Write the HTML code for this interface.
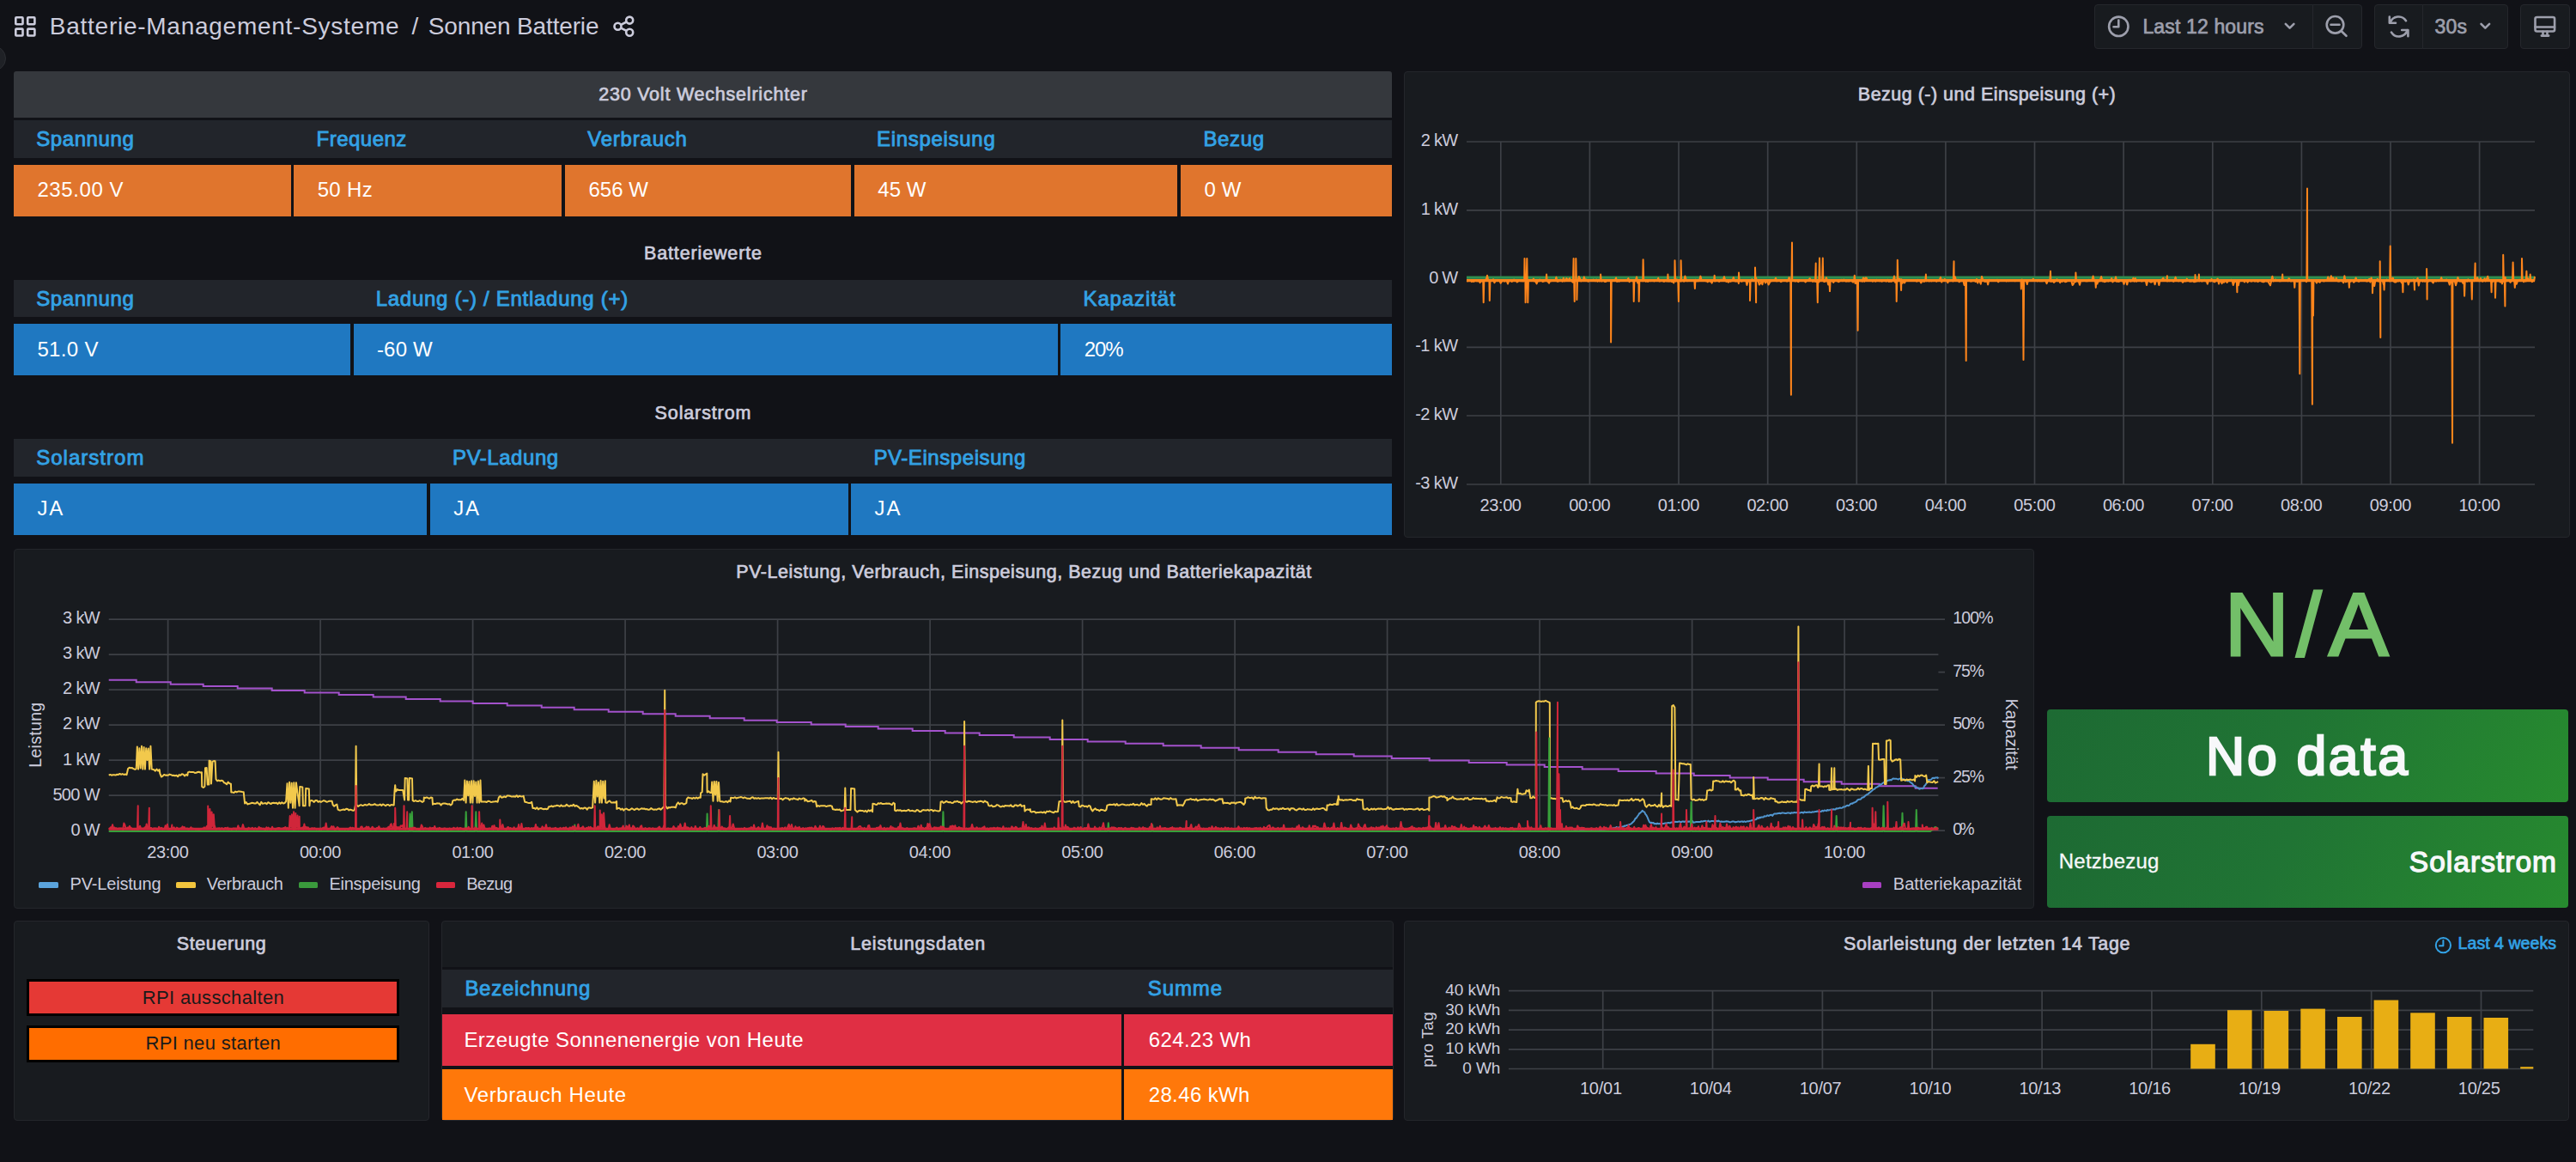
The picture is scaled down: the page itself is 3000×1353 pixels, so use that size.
<!DOCTYPE html>
<html lang="de"><head><meta charset="utf-8"><title>Sonnen Batterie - Grafana</title><style>
html,body{margin:0;padding:0;background:#111217;}
body{width:3000px;height:1353px;position:relative;overflow:hidden;font-family:"Liberation Sans",sans-serif;}
#root{position:absolute;left:0;top:0;width:3000px;height:1353px;overflow:hidden;background:#111217;}
#root>div{position:absolute;}
.t{position:absolute;white-space:nowrap;line-height:1;display:block;}
.ov{position:absolute;left:0;top:0;pointer-events:none;}
</style></head><body><div id="root">
<div style="left:2438.5px;top:5.0px;width:255.0px;height:51.5px;background:#181b1f;border:1px solid #25272c;box-sizing:border-box;border-radius:4px 0 0 4px;"></div>
<div style="left:2692.5px;top:5.0px;width:58.5px;height:51.5px;background:#181b1f;border:1px solid #25272c;box-sizing:border-box;border-radius:0 4px 4px 0;"></div>
<div style="left:2764.5px;top:5.0px;width:57.5px;height:51.5px;background:#181b1f;border:1px solid #25272c;box-sizing:border-box;border-radius:4px 0 0 4px;"></div>
<div style="left:2821.0px;top:5.0px;width:100.0px;height:51.5px;background:#181b1f;border:1px solid #25272c;box-sizing:border-box;border-radius:0 4px 4px 0;"></div>
<div style="left:2934.5px;top:5.0px;width:58.1px;height:51.5px;background:#181b1f;border:1px solid #25272c;box-sizing:border-box;border-radius:4px;"></div>
<div style="left:-24.0px;top:52.5px;width:30.5px;height:30.5px;background:#1f2126;border-radius:50%;border:1px solid #2c2e33;box-sizing:border-box;"></div>
<div style="left:16.0px;top:83.0px;width:1605.0px;height:54.0px;background:#35383d;border-radius:3px 3px 0 0;"></div>
<div style="left:16.0px;top:140.0px;width:1605.0px;height:43.8px;background:#22252b;"></div>
<div style="left:16.0px;top:191.8px;width:322.8px;height:59.8px;background:#e0752d;"></div>
<div style="left:342.3px;top:191.8px;width:311.9px;height:59.8px;background:#e0752d;"></div>
<div style="left:658.0px;top:191.8px;width:333.0px;height:59.8px;background:#e0752d;"></div>
<div style="left:994.8px;top:191.8px;width:376.7px;height:59.8px;background:#e0752d;"></div>
<div style="left:1375.2px;top:191.8px;width:245.8px;height:59.8px;background:#e0752d;"></div>
<div style="left:16.0px;top:325.5px;width:1605.0px;height:43.8px;background:#22252b;"></div>
<div style="left:16.0px;top:377.3px;width:391.7px;height:59.8px;background:#1f78c1;"></div>
<div style="left:411.5px;top:377.3px;width:820.3px;height:59.8px;background:#1f78c1;"></div>
<div style="left:1235.3px;top:377.3px;width:385.7px;height:59.8px;background:#1f78c1;"></div>
<div style="left:16.0px;top:511.0px;width:1605.0px;height:43.8px;background:#22252b;"></div>
<div style="left:16.0px;top:562.8px;width:481.3px;height:59.8px;background:#1f78c1;"></div>
<div style="left:500.9px;top:562.8px;width:486.7px;height:59.8px;background:#1f78c1;"></div>
<div style="left:991.2px;top:562.8px;width:629.8px;height:59.8px;background:#1f78c1;"></div>
<div style="left:1635.0px;top:83.0px;width:1357.5px;height:542.5px;background:#181b1f;border:1px solid #24262b;border-radius:4px;box-sizing:border-box;"></div>
<div style="left:16.0px;top:639.2px;width:2353.3px;height:418.5px;background:#181b1f;border:1px solid #24262b;border-radius:4px;box-sizing:border-box;"></div>
<div style="left:45.2px;top:1027.4px;width:22.6px;height:6.4px;background:#5ba4dc;border-radius:1.5px;"></div>
<div style="left:205.4px;top:1027.4px;width:22.6px;height:6.4px;background:#f2c53d;border-radius:1.5px;"></div>
<div style="left:347.5px;top:1027.4px;width:22.6px;height:6.4px;background:#3a9a3c;border-radius:1.5px;"></div>
<div style="left:507.8px;top:1027.4px;width:22.6px;height:6.4px;background:#d9263c;border-radius:1.5px;"></div>
<div style="left:2168.5px;top:1027.4px;width:22.6px;height:6.4px;background:#a83fc2;border-radius:1.5px;"></div>
<div style="left:2383.6px;top:826.2px;width:607.6px;height:107.4px;background:linear-gradient(120deg,#1d6a33 0%,#207434 45%,#278b2f 100%);border-radius:4px;"></div>
<div style="left:2383.6px;top:949.6px;width:607.6px;height:107.6px;background:linear-gradient(120deg,#1d6a33 0%,#207434 45%,#278b2f 100%);border-radius:4px;"></div>
<div style="left:16.0px;top:1072.0px;width:484.3px;height:233.3px;background:#181b1f;border:1px solid #24262b;border-radius:4px;box-sizing:border-box;"></div>
<div style="left:31.0px;top:1140.0px;width:433.8px;height:43.2px;background:#000;"></div>
<div style="left:34.0px;top:1143.0px;width:427.9px;height:37.3px;background:#e53935;"></div>
<div style="left:31.0px;top:1194.3px;width:433.8px;height:42.9px;background:#000;"></div>
<div style="left:34.0px;top:1197.4px;width:427.9px;height:36.8px;background:#ff6d00;"></div>
<div style="left:514.4px;top:1072.0px;width:1108.6px;height:233.3px;background:#181b1f;border:1px solid #24262b;border-radius:4px;box-sizing:border-box;"></div>
<div style="left:515.4px;top:1126.2px;width:1106.6px;height:3.0px;background:#111217;"></div>
<div style="left:515.4px;top:1129.2px;width:1106.6px;height:44.0px;background:#22252b;"></div>
<div style="left:515.4px;top:1173.2px;width:1106.6px;height:131.1px;background:#111217;"></div>
<div style="left:515.4px;top:1181.2px;width:790.2px;height:59.8px;background:#e02f44;"></div>
<div style="left:1309.4px;top:1181.2px;width:312.6px;height:59.8px;background:#e02f44;"></div>
<div style="left:515.4px;top:1244.8px;width:790.2px;height:59.5px;background:#ff780a;"></div>
<div style="left:1309.4px;top:1244.8px;width:312.6px;height:59.5px;background:#ff780a;"></div>
<div style="left:1635.4px;top:1072.0px;width:1357.0px;height:233.3px;background:#181b1f;border:1px solid #24262b;border-radius:4px;box-sizing:border-box;"></div>
<svg class="ov" width="3000" height="1353" viewBox="0 0 3000 1353">
<path d="M1708 165.0H2952M1708 244.9H2952M1708 324.8H2952M1708 404.4H2952M1708 484.0H2952M1708 564.0H2952M1747.8 165V564M1851.4 165V564M1955.0 165V564M2058.7 165V564M2162.3 165V564M2265.9 165V564M2369.5 165V564M2473.1 165V564M2576.8 165V564M2680.4 165V564M2784.0 165V564M2887.6 165V564" stroke="#3d4046" stroke-width="1.7" fill="none"/>
<path d="M1708 323.2H2952" stroke="#2f8f4f" stroke-width="3.2" fill="none"/>
<path d="M1708 326.6H2952" stroke="#ff851b" stroke-width="3.4" fill="none"/>
<path d="M1708.0 327.0 L1709.2 327.2 L1710.4 326.8 L1711.6 326.4 L1712.8 326.7 L1714.0 328.1 L1715.2 327.0 L1716.4 327.9 L1717.6 326.7 L1718.8 326.6 L1720.0 327.3 L1721.2 327.2 L1722.4 327.1 L1723.6 329.1 L1724.8 327.0 L1726.0 327.5 L1727.1 327.0 L1727.2 326.1 L1727.7 352.2 L1728.3 327.0 L1728.4 326.7 L1729.6 325.7 L1730.8 326.1 L1732.0 320.8 L1733.2 326.8 L1734.2 327.0 L1734.4 326.1 L1734.8 350.0 L1735.4 327.0 L1735.6 327.2 L1736.8 327.1 L1738.0 326.9 L1739.2 325.2 L1740.4 329.3 L1741.6 327.0 L1742.8 327.1 L1744.0 325.9 L1745.2 326.7 L1746.4 326.3 L1747.6 329.7 L1748.8 327.7 L1750.0 326.4 L1751.2 327.0 L1752.4 327.6 L1753.6 326.6 L1754.8 326.9 L1756.0 330.5 L1757.2 327.0 L1758.4 326.1 L1759.6 327.1 L1760.8 328.0 L1762.0 325.9 L1763.2 325.6 L1764.4 327.1 L1765.6 326.6 L1766.8 328.4 L1768.0 327.5 L1769.2 326.2 L1770.4 327.1 L1771.6 327.4 L1772.8 326.9 L1774.0 327.5 L1774.9 327.0 L1775.2 327.0 L1775.5 301.1 L1776.0 327.0 L1776.1 327.0 L1776.4 327.5 L1776.6 352.2 L1777.2 327.0 L1777.6 331.5 L1777.7 327.0 L1778.3 301.1 L1778.7 327.0 L1778.8 326.5 L1778.9 327.0 L1779.3 352.2 L1779.9 327.0 L1780.0 327.1 L1781.2 326.7 L1782.4 327.1 L1783.6 326.2 L1784.8 326.6 L1786.0 324.5 L1787.2 327.6 L1788.4 327.8 L1789.6 330.4 L1790.8 326.4 L1792.0 327.5 L1793.2 325.6 L1794.4 326.7 L1795.6 326.9 L1796.8 327.9 L1798.0 327.5 L1799.2 326.8 L1800.4 326.7 L1800.5 327.0 L1801.1 319.6 L1801.6 326.8 L1801.7 327.0 L1802.8 328.1 L1804.0 329.6 L1805.2 326.8 L1806.4 327.2 L1807.6 326.9 L1808.8 326.9 L1810.0 326.2 L1811.2 327.0 L1812.4 322.7 L1813.6 327.8 L1814.8 327.5 L1816.0 327.0 L1817.2 325.6 L1818.4 326.8 L1819.6 327.7 L1820.8 323.8 L1822.0 327.4 L1823.2 326.1 L1824.4 324.1 L1825.6 325.8 L1826.8 325.6 L1828.0 324.1 L1829.2 326.4 L1830.4 327.1 L1831.6 328.6 L1832.0 327.0 L1832.6 301.1 L1832.8 326.4 L1833.1 327.0 L1833.2 327.0 L1833.7 351.1 L1834.0 326.6 L1834.3 327.0 L1834.7 327.0 L1835.2 327.1 L1835.3 301.1 L1835.8 327.0 L1835.9 327.0 L1836.4 327.3 L1836.4 348.9 L1837.0 327.0 L1837.6 326.9 L1838.8 322.0 L1840.0 324.2 L1841.2 327.4 L1842.4 326.3 L1843.6 326.9 L1844.8 322.5 L1846.0 326.3 L1847.2 325.5 L1848.4 326.4 L1849.6 327.7 L1850.8 327.1 L1852.0 327.1 L1853.2 326.6 L1854.4 326.9 L1855.6 325.6 L1856.8 326.2 L1858.0 327.3 L1859.2 325.5 L1860.4 327.6 L1861.6 325.8 L1862.8 327.5 L1863.5 327.0 L1864.0 326.4 L1864.1 319.6 L1864.7 327.0 L1865.2 327.5 L1866.4 327.1 L1867.6 325.9 L1868.8 327.9 L1870.0 328.0 L1871.2 327.0 L1872.4 326.8 L1873.6 326.9 L1874.8 326.3 L1875.5 327.0 L1876.0 327.8 L1876.1 398.4 L1876.7 327.0 L1877.2 326.6 L1878.4 327.0 L1879.6 326.4 L1880.8 326.6 L1882.0 323.5 L1883.2 327.9 L1884.4 326.9 L1885.6 327.7 L1886.8 327.0 L1888.0 326.5 L1889.2 326.8 L1890.4 326.6 L1891.6 327.0 L1892.8 326.7 L1894.0 326.8 L1895.2 326.0 L1896.4 324.0 L1897.6 328.2 L1898.8 326.5 L1900.0 326.3 L1901.2 327.2 L1902.1 327.0 L1902.4 328.0 L1902.7 351.1 L1903.3 327.0 L1903.6 326.0 L1904.8 326.9 L1906.0 322.5 L1907.2 329.4 L1908.1 327.0 L1908.4 327.5 L1908.7 351.1 L1909.3 327.0 L1909.6 327.0 L1910.8 327.1 L1912.0 326.5 L1913.0 327.0 L1913.2 327.3 L1913.6 302.2 L1914.2 327.0 L1914.4 326.6 L1915.6 326.9 L1916.8 327.8 L1918.0 326.1 L1919.2 327.9 L1920.4 326.6 L1921.6 327.2 L1922.8 327.0 L1924.0 326.7 L1925.2 326.6 L1926.4 327.4 L1927.6 326.8 L1928.8 326.9 L1930.0 327.0 L1931.2 323.8 L1932.4 327.5 L1933.6 327.3 L1934.8 326.6 L1936.0 326.0 L1937.2 327.7 L1938.4 327.7 L1939.6 326.9 L1940.8 327.4 L1941.8 327.0 L1942.0 327.5 L1942.4 319.6 L1943.0 327.0 L1943.2 327.6 L1944.4 327.6 L1945.6 326.7 L1946.8 328.1 L1948.0 328.0 L1949.2 329.4 L1949.9 327.0 L1950.4 327.3 L1950.5 303.3 L1951.1 327.0 L1951.6 327.6 L1952.8 325.4 L1954.0 328.0 L1954.3 327.0 L1954.9 351.1 L1955.2 326.2 L1955.5 327.0 L1956.4 325.8 L1957.0 327.0 L1957.6 327.6 L1957.6 303.3 L1958.2 327.0 L1958.8 326.3 L1960.0 327.0 L1961.2 327.6 L1962.4 321.5 L1963.6 325.5 L1964.8 327.2 L1966.0 327.0 L1967.2 326.8 L1968.4 327.0 L1969.6 326.4 L1970.8 325.9 L1972.0 326.9 L1973.2 326.3 L1973.3 327.0 L1973.9 335.9 L1974.4 325.8 L1974.5 327.0 L1975.6 327.4 L1976.8 327.0 L1978.0 327.3 L1979.2 326.3 L1980.4 321.6 L1981.6 326.3 L1982.8 326.4 L1984.0 327.1 L1985.2 326.5 L1986.4 327.2 L1987.6 327.2 L1988.8 328.4 L1990.0 326.0 L1991.2 327.6 L1992.4 326.9 L1993.6 329.6 L1994.8 326.0 L1996.0 326.7 L1996.1 327.0 L1996.7 320.7 L1997.2 327.5 L1997.3 327.0 L1998.4 326.9 L1999.6 327.1 L2000.8 326.8 L2002.0 327.8 L2003.2 327.0 L2004.4 325.5 L2005.6 326.5 L2006.8 325.6 L2008.0 322.2 L2009.2 326.6 L2010.4 327.9 L2011.6 327.0 L2012.8 328.7 L2014.0 326.3 L2015.2 327.8 L2016.4 327.1 L2017.6 327.0 L2018.8 323.0 L2020.0 327.0 L2021.2 327.6 L2022.4 327.4 L2023.6 327.2 L2024.4 327.0 L2024.8 329.9 L2025.0 317.4 L2025.6 327.0 L2026.0 327.4 L2027.2 326.5 L2028.4 327.8 L2029.6 326.1 L2030.8 326.9 L2032.0 327.0 L2033.2 326.1 L2034.4 331.9 L2035.6 328.0 L2036.8 326.7 L2037.4 327.0 L2038.0 327.5 L2038.0 350.0 L2038.6 327.0 L2039.2 327.3 L2040.4 325.2 L2041.6 327.2 L2042.8 327.0 L2043.4 327.0 L2044.0 327.1 L2044.0 311.4 L2044.5 327.0 L2044.6 327.0 L2045.1 352.2 L2045.2 323.6 L2045.7 327.0 L2046.4 326.8 L2047.6 326.9 L2048.8 331.6 L2050.0 330.1 L2051.2 327.0 L2052.4 331.3 L2053.6 326.6 L2054.8 326.7 L2056.0 329.4 L2057.2 328.1 L2058.4 327.7 L2059.6 331.5 L2060.8 329.2 L2062.0 327.1 L2063.2 327.2 L2064.4 326.8 L2065.6 326.9 L2066.8 327.0 L2068.0 323.7 L2069.2 327.4 L2070.4 327.0 L2071.6 326.6 L2072.8 326.6 L2074.0 328.1 L2075.2 327.4 L2076.4 327.0 L2077.6 326.8 L2078.8 326.2 L2080.0 327.0 L2081.2 327.6 L2082.4 326.7 L2083.6 323.0 L2084.8 326.8 L2085.3 327.0 L2085.9 459.8 L2086.0 327.1 L2086.4 327.0 L2086.5 327.0 L2087.0 282.6 L2087.2 325.9 L2087.6 327.0 L2088.4 326.8 L2089.6 326.4 L2090.8 327.6 L2092.0 326.5 L2093.2 327.4 L2094.4 328.1 L2095.6 326.8 L2096.8 326.6 L2098.0 327.1 L2099.2 327.0 L2100.4 326.3 L2101.6 327.3 L2102.8 328.4 L2104.0 326.8 L2105.2 326.9 L2106.4 326.3 L2107.6 324.2 L2108.8 326.1 L2110.0 326.2 L2111.2 327.9 L2112.4 326.4 L2113.6 327.8 L2114.1 327.0 L2114.7 306.5 L2114.8 328.1 L2115.3 327.0 L2116.0 327.2 L2116.2 327.0 L2116.8 352.2 L2117.2 327.4 L2117.4 327.0 L2118.4 328.4 L2118.4 327.0 L2119.0 300.5 L2119.6 326.9 L2119.6 327.0 L2120.8 326.6 L2122.0 326.1 L2122.2 327.0 L2122.8 300.5 L2123.2 322.6 L2123.4 327.0 L2124.4 328.0 L2125.6 327.7 L2126.8 323.2 L2128.0 326.4 L2129.2 331.5 L2130.4 327.0 L2130.4 327.2 L2131.0 339.1 L2131.6 327.0 L2131.6 326.9 L2132.8 327.2 L2134.0 327.2 L2135.2 328.9 L2136.4 327.0 L2137.6 327.1 L2138.8 326.9 L2140.0 327.4 L2141.2 328.3 L2142.4 327.4 L2143.6 327.0 L2144.8 325.8 L2146.0 327.3 L2147.2 325.6 L2148.4 326.0 L2149.6 327.6 L2150.8 327.5 L2152.0 326.9 L2153.2 327.6 L2154.4 326.7 L2155.6 326.5 L2156.8 327.4 L2158.0 328.6 L2159.2 327.0 L2159.2 327.2 L2159.8 320.7 L2160.4 327.0 L2160.4 329.8 L2161.6 330.0 L2162.8 327.0 L2163.0 327.0 L2163.6 384.8 L2164.0 326.9 L2164.2 327.0 L2165.2 326.2 L2166.4 327.1 L2167.6 326.2 L2168.8 327.8 L2170.0 323.5 L2171.2 327.8 L2172.4 323.5 L2173.6 323.4 L2174.8 326.9 L2176.0 326.7 L2177.2 326.8 L2178.4 326.1 L2179.6 326.0 L2180.8 327.6 L2182.0 326.9 L2183.2 327.2 L2184.4 327.7 L2185.6 325.8 L2186.8 326.5 L2188.0 327.1 L2189.2 327.3 L2190.4 326.7 L2191.6 327.7 L2192.8 327.1 L2194.0 326.2 L2195.2 326.3 L2196.4 327.6 L2197.6 327.3 L2198.8 325.7 L2200.0 327.9 L2201.2 327.4 L2202.4 327.9 L2203.6 326.7 L2204.8 326.8 L2206.0 321.4 L2207.2 328.8 L2208.1 327.0 L2208.4 326.9 L2208.7 351.1 L2209.2 327.0 L2209.3 327.0 L2209.6 328.1 L2209.8 302.7 L2210.4 327.0 L2210.8 326.5 L2212.0 324.8 L2213.2 325.8 L2213.5 327.0 L2214.1 338.0 L2214.4 325.2 L2214.7 327.0 L2215.6 329.7 L2216.8 326.1 L2218.0 329.4 L2219.2 327.2 L2220.4 326.3 L2221.6 326.6 L2222.8 326.7 L2224.0 327.0 L2225.2 326.6 L2226.4 326.4 L2227.6 326.8 L2228.8 326.3 L2230.0 326.1 L2231.2 327.0 L2232.4 327.6 L2233.6 325.9 L2234.8 327.0 L2236.0 326.5 L2237.2 329.4 L2238.4 327.6 L2239.6 326.6 L2240.8 328.0 L2242.0 326.5 L2242.3 327.0 L2242.9 319.6 L2243.2 327.3 L2243.5 327.0 L2244.4 326.8 L2245.6 326.5 L2246.8 327.4 L2248.0 326.9 L2249.2 327.4 L2250.4 327.0 L2251.6 326.2 L2252.8 326.9 L2254.0 327.0 L2255.2 327.7 L2256.4 326.4 L2257.6 327.0 L2258.8 325.8 L2260.0 322.9 L2261.2 328.6 L2262.4 325.7 L2263.6 327.0 L2264.8 325.1 L2266.0 325.9 L2267.2 326.2 L2268.4 329.2 L2269.6 326.2 L2270.8 327.3 L2272.0 326.4 L2273.2 326.5 L2274.4 327.4 L2274.9 327.0 L2275.5 304.3 L2275.6 326.5 L2276.1 327.0 L2276.8 322.3 L2278.0 326.3 L2279.2 326.2 L2280.4 325.7 L2281.6 328.3 L2282.8 326.8 L2284.0 327.2 L2285.2 327.0 L2286.4 327.1 L2287.6 332.0 L2288.8 328.3 L2289.1 327.0 L2289.7 420.1 L2290.0 326.3 L2290.3 327.0 L2291.2 325.9 L2292.4 326.3 L2293.6 326.1 L2294.8 327.5 L2296.0 327.6 L2297.2 326.3 L2298.4 326.0 L2299.6 326.8 L2300.8 328.0 L2302.0 325.0 L2303.2 329.6 L2304.4 326.2 L2305.6 327.7 L2306.8 330.7 L2308.0 321.9 L2309.2 325.9 L2310.4 326.3 L2311.6 328.0 L2312.8 327.6 L2314.0 326.7 L2315.2 331.4 L2316.4 325.7 L2317.6 326.7 L2318.8 327.0 L2320.0 326.9 L2321.2 326.9 L2322.4 326.2 L2323.6 327.0 L2324.8 327.0 L2326.0 325.8 L2327.2 328.3 L2328.4 326.9 L2329.6 326.5 L2330.8 327.0 L2332.0 326.6 L2333.2 326.5 L2334.4 327.0 L2335.6 326.3 L2336.8 327.4 L2338.0 326.9 L2339.2 327.2 L2340.4 326.9 L2341.6 326.5 L2342.8 326.3 L2344.0 326.8 L2345.2 326.6 L2346.4 327.2 L2347.6 327.0 L2348.8 326.0 L2350.0 327.0 L2351.2 326.1 L2352.4 326.6 L2353.2 327.0 L2353.6 326.8 L2353.8 336.4 L2354.4 327.0 L2354.8 325.5 L2355.9 327.0 L2356.0 327.1 L2356.5 419.0 L2357.1 327.0 L2357.2 327.1 L2358.4 326.9 L2359.6 326.7 L2360.8 331.0 L2362.0 326.3 L2363.2 326.8 L2364.4 326.6 L2365.6 327.1 L2366.8 326.2 L2368.0 324.7 L2369.2 327.1 L2370.4 326.9 L2371.6 326.7 L2372.8 327.4 L2374.0 325.8 L2375.2 327.3 L2376.4 327.2 L2377.6 327.2 L2378.8 327.3 L2380.0 326.5 L2381.2 326.8 L2382.4 327.4 L2383.6 330.1 L2384.8 327.1 L2386.0 325.9 L2387.2 327.4 L2387.4 327.0 L2388.0 315.8 L2388.4 327.8 L2388.6 327.0 L2389.6 327.7 L2390.8 327.2 L2392.0 328.9 L2393.2 327.7 L2394.4 326.9 L2395.6 325.2 L2396.8 327.3 L2398.0 326.0 L2399.2 329.2 L2400.4 326.6 L2401.6 327.9 L2402.8 326.7 L2404.0 327.2 L2405.2 328.2 L2406.4 328.1 L2407.6 326.9 L2408.8 326.8 L2410.0 326.1 L2411.2 326.5 L2412.4 327.3 L2413.6 332.1 L2414.8 330.7 L2416.0 327.7 L2416.8 327.0 L2417.2 328.3 L2417.4 317.4 L2418.0 327.0 L2418.4 327.0 L2419.6 327.5 L2420.8 327.4 L2422.0 331.8 L2423.2 327.3 L2424.4 326.8 L2425.6 327.3 L2426.8 326.3 L2428.0 325.9 L2429.2 327.4 L2430.4 327.0 L2431.6 327.2 L2432.8 325.8 L2434.0 326.7 L2435.2 326.6 L2436.4 326.4 L2437.6 321.4 L2438.8 326.8 L2440.0 327.6 L2440.2 327.0 L2440.8 334.8 L2441.2 327.3 L2441.4 327.0 L2442.4 330.6 L2443.6 327.0 L2444.8 327.5 L2446.0 325.1 L2447.2 322.1 L2448.4 327.4 L2449.6 327.5 L2450.8 328.2 L2452.0 327.8 L2453.2 327.2 L2454.4 327.2 L2455.6 327.6 L2456.8 326.6 L2458.0 327.0 L2459.2 324.0 L2460.4 328.4 L2461.6 326.9 L2462.8 327.0 L2464.0 322.5 L2465.2 327.9 L2466.4 327.0 L2467.6 328.0 L2468.8 326.3 L2470.0 326.9 L2471.2 326.9 L2472.4 327.6 L2473.6 330.8 L2474.8 325.9 L2476.0 326.4 L2477.2 331.4 L2478.4 326.5 L2479.6 325.9 L2480.8 327.7 L2482.0 327.3 L2483.2 327.3 L2484.4 323.8 L2485.6 327.7 L2486.8 324.0 L2488.0 327.8 L2489.2 326.4 L2490.4 326.4 L2491.6 327.1 L2492.8 326.5 L2494.0 327.5 L2495.2 327.2 L2496.4 326.4 L2497.6 327.1 L2498.8 326.8 L2500.0 332.0 L2501.2 326.6 L2502.4 326.7 L2503.6 327.8 L2504.8 328.6 L2506.0 328.4 L2507.2 327.0 L2508.4 327.2 L2509.6 331.3 L2510.8 326.9 L2512.0 326.3 L2513.2 327.1 L2514.4 332.0 L2515.6 326.4 L2516.8 325.8 L2518.0 326.0 L2519.2 323.7 L2520.4 326.5 L2521.6 326.9 L2522.8 327.1 L2523.3 327.0 L2523.9 321.2 L2524.0 327.4 L2524.5 327.0 L2525.2 326.8 L2526.4 327.3 L2527.6 326.4 L2528.8 326.7 L2530.0 326.3 L2531.2 327.8 L2532.4 327.0 L2533.6 322.7 L2534.8 326.8 L2536.0 326.8 L2537.2 327.5 L2538.4 325.9 L2539.6 326.3 L2540.8 326.7 L2542.0 328.8 L2543.2 327.7 L2544.4 326.9 L2545.6 327.5 L2546.8 324.6 L2548.0 326.8 L2549.2 326.7 L2550.4 327.8 L2551.6 327.3 L2552.8 327.5 L2554.0 326.6 L2555.2 328.3 L2555.9 327.0 L2556.4 328.2 L2556.5 320.1 L2557.1 327.0 L2557.6 327.4 L2558.8 327.5 L2560.0 325.6 L2560.3 327.0 L2560.9 319.6 L2561.2 327.4 L2561.5 327.0 L2562.4 326.9 L2563.6 327.3 L2564.8 327.5 L2566.0 326.8 L2567.2 325.8 L2568.4 327.3 L2569.6 326.5 L2570.8 330.6 L2572.0 326.6 L2573.2 326.8 L2574.4 327.4 L2575.6 324.9 L2576.8 327.2 L2578.0 327.8 L2579.2 328.4 L2580.4 327.0 L2581.6 325.7 L2582.8 324.6 L2584.0 330.5 L2585.2 326.6 L2586.4 327.1 L2587.6 330.2 L2588.8 327.2 L2590.0 328.8 L2591.2 327.2 L2592.4 326.9 L2593.6 329.0 L2594.8 326.9 L2596.0 326.6 L2597.2 326.6 L2598.4 325.8 L2599.6 327.0 L2600.8 332.0 L2602.0 328.4 L2603.2 327.9 L2604.4 327.5 L2604.8 327.0 L2605.4 340.2 L2605.6 326.5 L2606.0 327.0 L2606.8 332.3 L2608.0 327.0 L2609.2 327.0 L2610.4 326.8 L2611.6 327.1 L2612.8 326.7 L2614.0 328.5 L2615.2 326.2 L2616.4 326.7 L2617.6 328.6 L2618.8 327.0 L2620.0 326.8 L2621.2 327.4 L2622.4 327.5 L2623.6 326.2 L2624.8 326.9 L2626.0 327.6 L2627.2 327.2 L2628.4 327.1 L2629.6 328.1 L2630.8 326.5 L2632.0 327.1 L2633.2 326.6 L2634.4 328.0 L2635.6 328.2 L2636.8 328.2 L2638.0 326.6 L2639.2 327.5 L2640.4 327.4 L2641.6 328.0 L2642.8 330.3 L2644.0 332.3 L2645.2 326.8 L2646.4 321.8 L2647.6 327.4 L2648.8 326.4 L2650.0 325.5 L2651.2 326.7 L2652.4 326.0 L2653.6 326.5 L2654.8 327.3 L2656.0 327.2 L2657.2 326.1 L2657.6 327.0 L2658.2 319.6 L2658.4 323.8 L2658.8 327.0 L2659.6 325.9 L2660.8 326.5 L2662.0 326.4 L2663.2 326.1 L2664.4 327.3 L2665.6 324.2 L2666.8 325.6 L2668.0 327.5 L2669.2 326.9 L2670.4 327.2 L2671.6 327.1 L2671.7 327.0 L2672.3 334.8 L2672.8 327.4 L2672.9 327.0 L2674.0 327.0 L2675.2 327.9 L2676.4 327.3 L2677.6 327.3 L2677.7 327.0 L2678.3 435.3 L2678.8 327.3 L2678.9 327.0 L2680.0 326.0 L2681.2 326.9 L2682.4 326.8 L2683.6 327.1 L2684.8 326.0 L2686.0 328.1 L2686.4 327.0 L2687.0 219.6 L2687.2 327.1 L2687.6 327.0 L2688.4 326.2 L2689.6 325.8 L2690.8 326.8 L2692.0 326.9 L2692.3 327.0 L2692.9 470.7 L2693.2 326.5 L2693.4 327.0 L2693.5 327.0 L2694.0 367.4 L2694.4 327.1 L2694.6 327.0 L2695.6 326.6 L2696.8 327.4 L2698.0 329.5 L2699.2 327.0 L2700.4 327.7 L2701.6 328.8 L2702.8 326.3 L2704.0 326.7 L2705.2 326.4 L2706.4 327.5 L2707.6 326.2 L2708.8 326.7 L2710.0 327.0 L2711.2 322.4 L2712.4 326.3 L2713.6 326.7 L2714.8 321.2 L2716.0 326.0 L2717.2 323.4 L2718.4 327.1 L2719.6 326.9 L2720.8 323.8 L2722.0 326.7 L2723.2 327.6 L2724.4 327.4 L2725.6 326.9 L2726.8 326.4 L2728.0 327.4 L2729.2 329.2 L2730.4 321.2 L2731.6 328.3 L2732.8 328.0 L2734.0 327.2 L2735.2 327.8 L2735.3 327.0 L2735.9 334.8 L2736.4 326.7 L2736.5 327.0 L2737.6 327.7 L2738.8 326.6 L2740.0 326.9 L2741.2 328.7 L2742.4 327.5 L2743.6 323.4 L2744.8 326.9 L2746.0 327.2 L2747.2 327.8 L2748.4 326.7 L2749.6 325.8 L2750.8 326.8 L2752.0 327.0 L2753.2 327.1 L2754.4 325.7 L2755.6 327.2 L2756.8 327.6 L2758.0 326.2 L2759.2 324.8 L2760.4 328.5 L2761.6 323.4 L2762.4 327.0 L2762.8 327.2 L2763.0 341.3 L2763.6 327.0 L2764.0 327.1 L2765.2 333.0 L2766.4 326.4 L2767.6 326.9 L2768.8 324.8 L2770.0 327.5 L2771.1 327.0 L2771.2 326.7 L2771.7 327.0 L2771.7 304.3 L2772.3 392.9 L2772.3 327.0 L2772.4 327.2 L2772.9 327.0 L2773.6 326.8 L2774.8 327.1 L2776.0 331.6 L2776.0 327.0 L2776.6 337.5 L2777.2 326.2 L2777.2 327.0 L2778.4 327.0 L2779.6 325.5 L2780.8 326.3 L2782.0 326.8 L2783.1 327.0 L2783.2 327.5 L2783.7 286.4 L2784.3 327.0 L2784.4 326.3 L2785.6 325.2 L2786.8 323.5 L2788.0 327.8 L2789.2 328.6 L2790.4 328.4 L2791.6 326.8 L2792.8 327.5 L2794.0 327.1 L2795.2 327.1 L2796.4 328.1 L2797.6 329.9 L2797.8 327.0 L2798.4 340.2 L2798.8 327.7 L2799.0 327.0 L2800.0 327.0 L2801.2 328.0 L2802.4 327.1 L2803.6 326.5 L2804.8 331.4 L2806.0 327.5 L2807.2 327.0 L2808.4 327.3 L2809.6 326.6 L2810.8 325.5 L2811.4 327.0 L2812.0 337.5 L2812.0 327.6 L2812.6 327.0 L2813.2 327.5 L2814.4 327.1 L2815.6 323.7 L2816.8 332.5 L2818.0 326.7 L2819.2 326.5 L2820.4 326.9 L2821.6 327.8 L2822.8 326.0 L2824.0 327.8 L2825.2 326.6 L2825.5 327.0 L2826.0 327.0 L2826.1 313.0 L2826.4 326.2 L2826.6 348.4 L2826.7 327.0 L2827.2 327.0 L2827.6 327.9 L2828.8 326.9 L2830.0 326.1 L2831.2 326.7 L2832.4 327.7 L2833.6 329.5 L2834.8 326.7 L2836.0 327.3 L2837.2 327.5 L2838.4 326.5 L2839.6 327.2 L2840.8 327.0 L2842.0 326.6 L2843.2 323.3 L2844.4 327.0 L2845.6 327.0 L2846.8 326.6 L2848.0 326.7 L2849.2 325.5 L2850.4 327.1 L2851.6 327.6 L2852.8 331.6 L2854.0 327.4 L2855.2 328.6 L2855.4 327.0 L2856.0 515.8 L2856.4 326.4 L2856.6 327.0 L2857.6 327.6 L2858.8 326.8 L2860.0 332.2 L2861.2 328.2 L2862.4 323.0 L2863.6 326.3 L2864.8 327.5 L2866.0 327.6 L2867.2 327.5 L2868.4 329.7 L2869.5 327.0 L2869.6 327.3 L2870.1 344.6 L2870.7 327.0 L2870.8 327.5 L2872.0 326.9 L2873.2 327.7 L2874.4 325.4 L2875.6 327.4 L2876.8 326.3 L2878.0 327.7 L2878.2 327.0 L2878.8 348.4 L2879.2 326.8 L2879.4 327.0 L2880.4 326.4 L2881.6 327.3 L2882.0 327.0 L2882.6 306.5 L2882.8 326.4 L2883.2 327.0 L2884.0 326.4 L2885.2 323.1 L2886.4 327.0 L2887.6 327.3 L2888.8 324.0 L2890.0 326.9 L2891.2 327.7 L2892.4 327.0 L2893.6 324.4 L2894.8 327.4 L2896.0 325.0 L2897.2 321.8 L2898.4 326.8 L2899.6 326.9 L2900.8 327.1 L2901.0 327.0 L2901.6 340.2 L2902.0 326.4 L2902.2 327.0 L2903.2 327.7 L2904.4 326.7 L2905.4 327.0 L2905.6 327.3 L2906.0 346.7 L2906.6 327.0 L2906.8 326.4 L2908.0 327.3 L2909.2 327.3 L2910.4 326.7 L2911.6 328.4 L2912.8 327.3 L2914.0 330.4 L2914.6 327.0 L2915.2 327.7 L2915.2 296.7 L2915.8 327.0 L2916.4 326.5 L2916.8 327.0 L2917.4 356.5 L2917.6 322.7 L2918.0 327.0 L2918.8 327.3 L2920.0 327.0 L2921.2 327.0 L2922.4 326.8 L2923.6 328.8 L2924.8 326.8 L2926.0 325.4 L2926.0 327.0 L2926.6 305.4 L2927.2 323.5 L2927.2 327.0 L2928.2 327.0 L2928.4 329.6 L2928.8 334.8 L2929.4 327.0 L2929.6 330.5 L2930.8 330.7 L2932.0 327.2 L2933.2 326.0 L2934.4 325.8 L2935.6 326.3 L2936.4 327.0 L2936.8 325.6 L2937.0 301.1 L2937.6 327.0 L2938.0 326.3 L2939.2 328.1 L2940.4 326.3 L2941.6 327.5 L2941.8 327.0 L2942.4 315.8 L2942.8 326.0 L2943.0 327.0 L2944.0 324.4 L2945.2 326.8 L2946.1 327.0 L2946.4 327.0 L2946.7 319.6 L2947.3 327.0 L2947.6 325.6 L2948.8 328.2 L2950.0 327.1 L2951.2 327.1 L2952.0 322.0" stroke="#ff851b" stroke-width="2" fill="none" stroke-linejoin="round"/>
<path d="M126.7 721.2H2257.4M126.7 762.2H2257.4M126.7 803.2H2257.4M126.7 844.1H2257.4M126.7 885.1H2257.4M126.7 926.1H2257.4M126.7 967.1H2257.4M195.6 721.2V967.1M373.1 721.2V967.1M550.6 721.2V967.1M728.1 721.2V967.1M905.6 721.2V967.1M1083.1 721.2V967.1M1260.6 721.2V967.1M1438.1 721.2V967.1M1615.6 721.2V967.1M1793.1 721.2V967.1M1970.6 721.2V967.1M2148.1 721.2V967.1M2257.4 721.2H2265M2257.4 782.7H2265M2257.4 844.1H2265M2257.4 905.6H2265M2257.4 967.1H2265" stroke="#3d4046" stroke-width="1.7" fill="none"/>
<path d="M126.7 791.7 L158.7 791.7 L158.7 794.2 L198.7 794.2 L198.7 796.7 L236.7 796.7 L236.7 799.1 L276.7 799.1 L276.7 801.6 L316.7 801.6 L316.7 804.1 L354.7 804.1 L354.7 806.5 L394.7 806.5 L394.7 809.0 L434.7 809.0 L434.7 811.5 L472.7 811.5 L472.7 814.0 L512.7 814.0 L512.7 816.4 L550.7 816.4 L550.7 818.9 L590.7 818.9 L590.7 821.4 L630.7 821.4 L630.7 823.8 L668.7 823.8 L668.7 826.3 L708.7 826.3 L708.7 828.8 L748.7 828.8 L748.7 831.2 L786.7 831.2 L786.7 833.7 L826.7 833.7 L826.7 836.2 L866.7 836.2 L866.7 838.7 L904.7 838.7 L904.7 841.1 L944.7 841.1 L944.7 843.6 L984.7 843.6 L984.7 846.1 L1022.7 846.1 L1022.7 848.5 L1062.7 848.5 L1062.7 851.0 L1100.7 851.0 L1100.7 853.5 L1140.7 853.5 L1140.7 856.0 L1180.7 856.0 L1180.7 858.4 L1222.7 858.4 L1222.7 860.9 L1266.7 860.9 L1266.7 863.4 L1310.7 863.4 L1310.7 865.8 L1354.7 865.8 L1354.7 868.3 L1398.7 868.3 L1398.7 870.8 L1442.7 870.8 L1442.7 873.2 L1488.7 873.2 L1488.7 875.7 L1532.7 875.7 L1532.7 878.2 L1576.7 878.2 L1576.7 880.6 L1620.7 880.6 L1620.7 883.1 L1664.7 883.1 L1664.7 885.6 L1710.7 885.6 L1710.7 888.1 L1754.7 888.1 L1754.7 890.5 L1798.7 890.5 L1798.7 893.0 L1842.7 893.0 L1842.7 895.5 L1884.7 895.5 L1884.7 897.9 L1928.7 897.9 L1928.7 900.4 L1972.7 900.4 L1972.7 902.9 L2014.7 902.9 L2014.7 905.4 L2058.7 905.4 L2058.7 907.8 L2100.7 907.8 L2100.7 910.3 L2144.7 910.3 L2144.7 912.8 L2188.7 912.8 L2188.7 915.2 L2230.7 915.2 L2230.7 917.7 L2256.7 917.7" stroke="#a352cc" stroke-width="2" fill="none"/>
<path d="M1824.2 967.8 L1825.4 967.5 L1826.5 967.6 L1827.7 967.8 L1828.9 967.9 L1830.0 967.6 L1831.2 967.8 L1832.4 967.9 L1833.5 966.9 L1834.7 967.1 L1835.9 966.9 L1837.0 967.3 L1838.2 967.8 L1839.4 967.4 L1840.5 966.8 L1841.7 967.0 L1842.8 967.5 L1844.0 966.9 L1845.2 967.0 L1846.3 967.1 L1847.5 966.3 L1848.7 967.3 L1849.8 967.1 L1851.0 967.1 L1852.2 966.5 L1853.3 966.6 L1854.5 966.6 L1855.7 966.9 L1856.8 966.8 L1858.0 966.8 L1859.2 967.4 L1860.3 967.2 L1861.5 966.4 L1862.6 966.2 L1863.8 967.0 L1865.0 966.1 L1866.1 966.5 L1867.3 966.5 L1868.5 965.5 L1869.6 965.5 L1870.8 965.4 L1872.0 964.9 L1873.1 964.7 L1874.3 964.8 L1875.5 965.1 L1876.6 964.5 L1877.8 964.4 L1878.9 964.2 L1880.1 963.7 L1881.3 964.6 L1882.4 963.0 L1883.6 963.5 L1884.8 963.8 L1885.9 962.9 L1887.1 963.5 L1888.3 963.6 L1889.4 962.6 L1890.6 962.5 L1891.8 961.6 L1892.9 961.7 L1894.1 961.1 L1895.3 960.7 L1896.4 960.7 L1897.6 959.9 L1898.7 959.7 L1899.9 959.0 L1901.1 957.8 L1902.2 956.8 L1903.4 955.3 L1904.6 953.0 L1905.7 952.5 L1906.9 950.5 L1908.1 949.0 L1909.2 947.1 L1910.4 946.3 L1911.6 945.2 L1912.7 943.8 L1913.9 945.1 L1915.1 945.4 L1916.2 947.9 L1917.4 949.2 L1918.5 951.4 L1919.7 954.4 L1920.9 957.0 L1922.0 958.1 L1923.2 957.7 L1924.4 958.3 L1925.5 958.0 L1926.7 959.3 L1927.9 958.9 L1929.0 959.5 L1930.2 958.6 L1931.4 959.3 L1932.5 958.9 L1933.7 959.6 L1934.8 959.8 L1936.0 959.1 L1937.2 959.1 L1938.3 958.8 L1939.5 958.5 L1940.7 958.6 L1941.8 958.3 L1943.0 957.9 L1944.2 958.3 L1945.3 958.3 L1946.5 957.4 L1947.7 957.4 L1948.8 957.5 L1950.0 957.2 L1951.2 956.8 L1952.3 957.1 L1953.5 957.0 L1954.6 956.7 L1955.8 956.4 L1957.0 957.2 L1958.1 957.2 L1959.3 956.4 L1960.5 956.5 L1961.6 957.0 L1962.8 956.3 L1964.0 956.8 L1965.1 956.7 L1966.3 956.5 L1967.5 956.7 L1968.6 956.2 L1969.8 956.6 L1971.0 956.1 L1972.1 957.7 L1973.3 957.5 L1974.4 957.3 L1975.6 956.9 L1976.8 957.1 L1977.9 957.1 L1979.1 957.0 L1980.3 956.9 L1981.4 956.2 L1982.6 956.6 L1983.8 956.2 L1984.9 955.9 L1986.1 955.8 L1987.3 956.4 L1988.4 956.5 L1989.6 955.6 L1990.7 956.7 L1991.9 956.5 L1993.1 955.9 L1994.2 955.9 L1995.4 956.1 L1996.6 956.5 L1997.7 956.0 L1998.9 955.8 L2000.1 956.4 L2001.2 955.5 L2002.4 956.4 L2003.6 956.8 L2004.7 956.5 L2005.9 956.7 L2007.1 956.7 L2008.2 956.8 L2009.4 956.6 L2010.5 956.3 L2011.7 956.5 L2012.9 956.6 L2014.0 957.2 L2015.2 957.3 L2016.4 956.9 L2017.5 956.5 L2018.7 956.6 L2019.9 956.8 L2021.0 957.4 L2022.2 956.9 L2023.4 956.7 L2024.5 956.4 L2025.7 956.9 L2026.9 956.7 L2028.0 956.5 L2029.2 956.5 L2030.3 957.0 L2031.5 956.3 L2032.7 956.9 L2033.8 956.7 L2035.0 956.2 L2036.2 956.4 L2037.3 956.0 L2038.5 955.7 L2039.7 955.5 L2040.8 954.9 L2042.0 955.0 L2043.2 954.4 L2044.3 954.2 L2045.5 954.0 L2046.6 952.1 L2047.8 953.0 L2049.0 951.8 L2050.1 952.2 L2051.3 951.4 L2052.5 951.4 L2053.6 951.6 L2054.8 950.2 L2056.0 950.6 L2057.1 950.3 L2058.3 949.3 L2059.5 950.0 L2060.6 949.5 L2061.8 949.0 L2063.0 948.7 L2064.1 949.9 L2065.3 948.3 L2066.4 947.5 L2067.6 947.6 L2068.8 947.5 L2069.9 947.3 L2071.1 947.1 L2072.3 946.7 L2073.4 947.2 L2074.6 946.8 L2075.8 946.4 L2076.9 946.6 L2078.1 946.7 L2079.3 947.1 L2080.4 946.9 L2081.6 946.5 L2082.8 946.6 L2083.9 946.6 L2085.1 947.2 L2086.2 946.2 L2087.4 946.5 L2088.6 946.5 L2089.7 945.9 L2090.9 946.2 L2092.1 946.2 L2093.2 945.9 L2094.4 946.2 L2095.6 946.4 L2096.7 946.4 L2097.9 945.8 L2099.1 945.9 L2100.2 946.7 L2101.4 945.3 L2102.5 945.8 L2103.7 946.0 L2104.9 945.7 L2106.0 945.8 L2107.2 945.6 L2108.4 945.8 L2109.5 945.9 L2110.7 945.3 L2111.9 945.4 L2113.0 945.3 L2114.2 945.0 L2115.4 945.0 L2116.5 944.4 L2117.7 945.0 L2118.9 945.2 L2120.0 945.1 L2121.2 944.8 L2122.3 943.8 L2123.5 944.6 L2124.7 943.6 L2125.8 943.7 L2127.0 944.2 L2128.2 943.0 L2129.3 943.6 L2130.5 943.2 L2131.7 942.9 L2132.8 942.5 L2134.0 942.7 L2135.2 942.2 L2136.3 942.6 L2137.5 942.5 L2138.7 941.3 L2139.8 941.4 L2141.0 941.3 L2142.1 940.8 L2143.3 940.6 L2144.5 940.9 L2145.6 940.6 L2146.8 939.5 L2148.0 939.4 L2149.1 939.3 L2150.3 938.2 L2151.5 937.8 L2152.6 938.2 L2153.8 937.6 L2155.0 936.0 L2156.1 935.6 L2157.3 935.8 L2158.4 934.7 L2159.6 934.5 L2160.8 933.8 L2161.9 933.4 L2163.1 931.6 L2164.3 931.0 L2165.4 930.7 L2166.6 930.8 L2167.8 929.7 L2168.9 928.4 L2170.1 928.4 L2171.3 927.6 L2172.4 926.4 L2173.6 925.5 L2174.8 924.9 L2175.9 924.3 L2177.1 923.0 L2178.2 922.3 L2179.4 921.2 L2180.6 920.2 L2181.7 919.1 L2182.9 918.7 L2184.1 917.6 L2185.2 916.8 L2186.4 916.4 L2187.6 915.3 L2188.7 914.8 L2189.9 913.2 L2191.1 913.3 L2192.2 912.1 L2193.4 911.4 L2194.5 910.6 L2195.7 910.7 L2196.9 909.9 L2198.0 909.0 L2199.2 908.5 L2200.4 908.5 L2201.5 908.0 L2202.7 908.4 L2203.9 906.9 L2205.0 906.5 L2206.2 906.7 L2207.4 906.8 L2208.5 906.8 L2209.7 907.1 L2210.9 907.6 L2212.0 906.7 L2213.2 906.6 L2214.3 906.1 L2215.5 906.9 L2216.7 907.5 L2217.8 907.5 L2219.0 908.4 L2220.2 908.3 L2221.3 909.3 L2222.5 909.2 L2223.7 909.7 L2224.8 910.9 L2226.0 911.6 L2227.2 912.5 L2228.3 914.2 L2229.5 915.5 L2230.7 916.5 L2231.8 916.5 L2233.0 917.1 L2234.1 917.4 L2235.3 918.7 L2236.5 918.4 L2237.6 917.9 L2238.8 918.3 L2240.0 917.8 L2241.1 915.0 L2242.3 914.1 L2243.5 912.0 L2244.6 909.9 L2245.8 908.0 L2247.0 908.4 L2248.1 907.9 L2249.3 907.5 L2250.4 906.0 L2251.6 905.7 L2252.8 906.2 L2253.9 905.4 L2255.1 905.6 L2256.3 905.2 L2257.4 906.5" stroke="#5195ce" stroke-width="2" fill="none" stroke-linejoin="round"/>
<path d="M126.7 902.6 L128.3 901.9 L129.9 902.7 L131.5 902.3 L133.1 902.3 L134.7 902.6 L136.3 901.7 L137.9 901.9 L139.5 900.9 L141.1 901.8 L142.7 901.1 L144.3 902.0 L145.9 901.5 L147.5 902.2 L149.1 895.0 L150.7 893.7 L152.3 894.2 L153.9 894.1 L155.5 895.2 L157.1 895.9 L158.7 895.3 L159.8 869.4 L161.1 895.6 L162.4 871.2 L163.7 894.5 L165.0 868.8 L166.3 895.6 L167.6 870.0 L168.9 895.6 L170.2 871.2 L171.5 884.9 L172.8 871.6 L174.1 895.6 L175.4 868.7 L176.7 895.6 L179.3 896.3 L180.9 897.6 L182.5 895.5 L184.1 897.6 L185.7 896.1 L186.3 900.7 L187.9 904.5 L189.5 903.7 L191.1 901.9 L192.7 902.7 L194.3 902.5 L195.9 902.7 L197.5 901.6 L199.1 902.1 L200.7 902.9 L202.3 902.8 L203.9 903.4 L205.5 902.7 L207.1 904.3 L208.7 902.1 L210.3 902.8 L211.9 901.3 L213.5 901.7 L215.1 903.5 L216.7 901.9 L218.3 903.0 L218.9 899.3 L220.5 898.6 L222.1 899.1 L223.7 899.0 L225.3 899.0 L226.9 899.9 L228.5 899.8 L230.1 899.0 L231.7 898.7 L233.3 899.6 L234.9 899.3 L235.2 915.9 L236.8 917.0 L238.4 915.7 L239.0 894.2 L240.6 894.1 L241.8 913.6 L243.4 913.6 L243.6 885.7 L245.2 886.1 L246.0 912.5 L247.4 886.9 L249.0 886.1 L250.6 886.2 L251.5 907.3 L253.1 909.3 L254.7 908.5 L256.3 909.4 L257.9 908.7 L259.5 909.2 L260.9 911.3 L262.5 911.9 L264.1 913.3 L265.7 910.6 L267.3 912.2 L268.9 912.6 L269.3 922.4 L270.9 922.6 L272.5 923.0 L274.1 921.6 L275.7 922.4 L277.3 921.5 L278.9 921.6 L280.5 921.7 L282.1 922.0 L283.7 922.2 L285.1 935.4 L286.7 934.1 L288.3 936.5 L289.9 935.9 L291.5 935.6 L293.1 934.8 L294.7 935.0 L296.3 935.5 L297.9 935.4 L299.5 933.9 L301.1 935.6 L302.7 937.2 L304.3 933.8 L305.9 935.8 L307.5 935.4 L309.1 935.0 L310.7 936.1 L312.3 934.2 L313.9 935.2 L315.5 936.1 L317.1 934.9 L318.7 934.8 L320.3 935.2 L321.9 934.8 L323.5 936.2 L325.1 934.4 L326.7 935.7 L328.3 934.2 L329.9 935.6 L331.5 935.0 L333.1 933.2 L334.5 912.3 L335.8 940.7 L337.1 910.7 L338.4 934.7 L339.7 911.7 L341.0 940.7 L342.3 911.3 L343.6 940.7 L344.9 911.2 L348.6 938.3 L349.2 916.1 L352.3 916.6 L352.9 938.3 L355.6 938.3 L356.2 917.9 L359.8 918.4 L360.4 938.3 L361.0 932.8 L362.6 932.0 L364.2 932.4 L365.8 933.9 L367.4 932.0 L369.0 932.0 L370.6 933.8 L372.2 932.9 L373.8 933.9 L375.4 933.0 L377.0 932.1 L378.6 932.7 L380.2 933.7 L381.8 933.4 L383.4 932.8 L385.0 932.8 L386.6 932.7 L387.6 937.0 L389.2 938.8 L390.8 937.4 L392.4 936.6 L393.6 942.6 L395.2 943.5 L396.8 943.4 L398.4 942.9 L400.0 942.5 L401.6 943.0 L403.2 941.8 L404.8 942.0 L406.4 943.5 L408.0 942.6 L409.6 943.2 L411.2 943.9 L412.8 943.4 L413.9 937.4 L414.6 868.7 L415.3 937.4 L415.5 937.4 L417.1 938.9 L418.7 937.9 L420.3 937.2 L421.9 937.9 L423.5 937.7 L425.1 936.8 L426.7 937.5 L428.3 937.3 L429.9 936.0 L431.5 937.3 L433.1 937.2 L434.7 937.1 L436.3 936.2 L437.9 937.2 L439.5 937.4 L441.1 937.5 L442.7 936.6 L444.3 937.9 L445.9 936.5 L447.5 937.2 L449.1 938.3 L450.7 936.9 L452.3 937.0 L453.9 938.2 L455.5 937.1 L457.1 937.2 L458.7 937.6 L459.5 921.5 L460.2 914.2 L460.9 921.5 L461.2 921.5 L462.8 919.1 L464.4 920.1 L466.0 920.0 L467.6 919.9 L469.2 920.1 L471.1 931.4 L471.7 905.9 L474.4 906.4 L475.0 931.4 L476.2 931.4 L476.8 905.9 L480.0 906.4 L480.6 931.4 L480.7 932.2 L482.3 933.0 L483.9 932.1 L485.5 932.9 L487.1 933.1 L488.7 932.2 L490.3 932.9 L491.9 933.9 L493.5 933.0 L493.8 928.6 L495.4 929.0 L497.0 928.4 L498.6 929.2 L500.2 929.7 L501.8 928.5 L503.4 928.9 L504.0 936.8 L505.6 935.7 L507.2 936.1 L508.8 935.3 L510.4 935.4 L512.0 935.6 L513.6 937.5 L515.2 935.7 L516.8 935.6 L518.4 935.6 L520.0 935.9 L521.6 936.5 L523.2 936.1 L524.8 937.5 L526.4 936.2 L527.3 932.4 L528.9 931.6 L530.5 931.8 L532.1 930.4 L533.7 931.3 L535.3 931.3 L536.9 931.2 L538.5 929.9 L540.1 932.0 L541.3 908.5 L542.6 934.6 L543.9 909.5 L545.2 926.3 L546.5 910.1 L547.8 934.6 L549.1 909.2 L550.4 934.6 L551.7 909.3 L553.0 926.9 L554.3 910.6 L555.6 934.6 L556.9 909.5 L558.2 934.6 L559.5 908.5 L560.4 933.4 L562.0 933.4 L563.6 933.5 L565.2 933.5 L566.8 934.0 L568.4 932.8 L570.0 933.0 L571.6 933.9 L573.2 933.8 L574.8 933.4 L576.4 933.3 L578.0 933.1 L579.6 933.7 L580.9 928.5 L582.5 926.9 L584.1 928.7 L585.7 928.3 L587.3 927.3 L588.9 928.2 L590.5 926.6 L592.1 926.5 L593.7 926.8 L595.3 927.4 L596.9 927.4 L598.5 927.3 L600.1 927.7 L601.7 926.2 L603.3 928.0 L604.9 926.7 L606.5 927.2 L608.1 927.4 L609.7 926.9 L611.2 933.7 L612.8 933.9 L614.4 934.6 L616.0 935.0 L617.6 935.0 L619.2 933.9 L620.5 941.0 L622.1 940.9 L623.7 941.9 L625.3 940.2 L626.9 942.4 L628.5 941.2 L630.1 941.0 L631.7 941.8 L633.3 942.3 L634.9 941.8 L636.5 942.3 L638.1 941.7 L639.1 939.2 L640.7 939.2 L642.3 938.3 L643.9 939.3 L645.5 938.4 L647.1 938.4 L648.7 937.7 L650.3 938.1 L651.9 938.9 L653.5 937.4 L655.1 938.8 L656.7 938.6 L658.3 938.5 L659.9 936.8 L661.5 938.3 L663.1 938.8 L664.7 937.8 L666.3 938.4 L667.9 936.7 L669.5 938.8 L671.1 937.9 L672.7 938.9 L674.1 939.8 L675.7 941.6 L677.3 941.0 L678.9 941.7 L680.5 940.5 L682.1 940.7 L683.7 942.7 L685.3 940.5 L686.9 940.6 L688.5 940.9 L690.1 940.4 L691.8 909.8 L693.1 934.6 L694.4 908.9 L695.7 927.4 L697.0 911.1 L698.3 934.6 L699.6 909.0 L700.9 934.6 L702.2 909.7 L703.5 929.5 L704.8 909.3 L705.3 934.5 L706.9 934.9 L708.5 933.2 L710.1 932.5 L711.7 934.5 L713.3 934.5 L714.9 934.3 L716.5 934.5 L718.1 933.1 L718.3 941.9 L719.9 941.1 L721.5 941.1 L723.1 942.7 L724.7 941.6 L726.3 943.6 L727.9 942.1 L729.5 941.6 L731.1 942.6 L732.7 943.3 L734.3 942.4 L735.9 941.2 L737.5 942.3 L739.1 943.0 L740.7 941.7 L742.3 941.5 L743.9 942.8 L745.5 942.1 L747.1 941.3 L748.7 941.8 L750.3 941.5 L751.9 942.3 L753.5 942.1 L755.1 942.9 L756.7 942.5 L758.3 941.0 L759.9 942.3 L761.5 942.7 L763.1 942.4 L764.7 942.8 L766.3 941.7 L767.9 941.4 L769.5 942.7 L771.1 941.3 L773.5 939.1 L774.2 803.8 L774.9 939.1 L775.6 939.1 L777.2 941.4 L778.8 940.1 L780.4 940.4 L782.0 939.7 L783.6 939.7 L785.2 939.8 L786.8 940.4 L788.2 936.3 L789.8 934.4 L791.4 936.5 L793.0 935.2 L794.6 935.3 L796.2 936.5 L797.8 936.0 L799.4 934.9 L799.8 930.3 L801.4 928.5 L803.0 929.2 L804.6 929.2 L806.2 930.0 L807.8 928.7 L809.4 929.8 L811.0 928.5 L812.6 929.8 L814.2 928.5 L815.8 928.8 L816.1 923.4 L817.7 922.3 L818.5 901.3 L820.1 902.8 L821.7 901.5 L823.3 900.6 L823.6 922.6 L825.2 921.3 L826.8 922.9 L828.4 922.9 L829.2 910.5 L830.5 932.8 L831.8 909.9 L833.1 925.5 L834.4 909.9 L835.7 932.8 L837.0 911.0 L838.3 932.8 L839.4 933.3 L841.0 933.3 L842.6 933.8 L844.2 933.7 L845.8 933.0 L847.4 934.1 L849.0 932.3 L850.6 933.4 L851.1 928.8 L852.7 928.9 L854.3 929.3 L855.9 928.2 L857.5 929.5 L859.1 928.9 L860.7 928.6 L862.3 928.1 L863.9 928.2 L865.5 929.3 L867.1 928.4 L868.7 929.1 L870.3 929.8 L871.9 929.8 L873.5 930.1 L875.1 928.8 L876.7 928.3 L878.3 929.8 L879.9 929.3 L881.5 929.8 L883.1 929.1 L884.7 929.9 L886.3 929.6 L887.9 929.6 L889.5 929.4 L891.1 929.3 L892.7 929.2 L894.3 929.2 L895.9 929.7 L897.5 928.7 L899.1 930.3 L900.7 929.0 L902.3 929.7 L905.8 929.9 L906.5 875.7 L907.2 929.9 L908.4 929.9 L910.0 929.8 L911.6 931.4 L913.2 929.8 L914.8 929.1 L916.4 929.5 L918.0 929.8 L919.6 931.5 L921.2 930.1 L922.8 930.6 L924.4 929.3 L926.0 930.2 L927.6 930.5 L929.2 931.2 L930.8 929.5 L932.4 930.4 L934.0 930.2 L935.6 929.3 L937.2 930.0 L937.3 932.6 L938.9 931.1 L940.5 933.2 L942.1 933.1 L943.7 932.5 L945.3 931.8 L946.9 933.8 L948.5 933.0 L950.1 933.5 L951.2 939.3 L952.8 938.0 L954.4 938.9 L956.0 938.2 L957.6 938.3 L959.2 938.3 L960.8 938.3 L962.4 939.1 L964.0 938.4 L965.6 938.2 L967.2 938.1 L968.8 938.6 L969.9 942.3 L971.5 942.6 L973.1 942.9 L974.7 942.6 L976.3 942.9 L977.9 942.5 L979.5 944.4 L981.1 943.9 L982.7 943.3 L983.6 943.0 L984.3 917.5 L985.0 943.0 L990.5 943.0 L991.1 917.9 L995.2 918.4 L995.8 943.0 L996.9 943.9 L998.5 945.4 L1000.1 944.1 L1001.7 943.8 L1003.3 944.1 L1004.9 944.1 L1006.5 944.9 L1008.1 943.9 L1009.7 945.4 L1011.3 943.3 L1012.9 944.4 L1014.5 943.2 L1016.1 945.2 L1016.4 935.8 L1018.0 936.0 L1019.6 936.7 L1021.2 936.9 L1022.8 935.2 L1024.4 935.8 L1026.0 935.0 L1027.6 936.1 L1029.2 935.9 L1030.8 935.8 L1032.4 935.5 L1034.0 935.7 L1035.6 935.5 L1037.2 936.4 L1038.8 937.1 L1040.4 934.7 L1042.0 935.9 L1042.1 943.6 L1043.7 944.2 L1045.3 943.2 L1046.9 943.8 L1048.5 943.2 L1050.1 944.4 L1051.7 944.0 L1053.3 943.8 L1054.9 944.2 L1056.5 943.7 L1058.1 942.8 L1059.7 944.3 L1061.3 944.1 L1062.9 943.8 L1064.5 944.6 L1066.1 944.8 L1067.7 943.1 L1069.3 943.4 L1070.9 945.0 L1072.5 944.9 L1074.1 943.4 L1075.7 943.1 L1077.3 943.5 L1078.9 943.6 L1080.5 942.8 L1082.1 943.9 L1083.7 943.0 L1085.3 943.1 L1086.9 944.5 L1088.5 943.4 L1090.1 943.9 L1091.7 944.3 L1093.3 944.5 L1094.9 943.7 L1095.6 933.7 L1097.2 933.1 L1098.8 934.9 L1100.4 934.1 L1102.0 932.9 L1103.6 933.7 L1105.2 934.2 L1106.8 934.0 L1108.4 935.0 L1110.0 934.7 L1111.6 933.3 L1113.2 933.6 L1114.8 932.8 L1116.4 933.9 L1118.0 933.8 L1119.6 935.6 L1121.2 933.8 L1122.4 933.2 L1122.8 932.2 L1123.1 840.0 L1123.8 933.2 L1124.4 933.2 L1126.0 933.8 L1127.6 932.8 L1129.2 933.1 L1130.8 933.4 L1132.4 933.9 L1134.0 933.6 L1135.6 933.1 L1137.2 934.2 L1138.8 933.3 L1140.4 933.3 L1142.0 932.7 L1143.6 933.1 L1145.2 934.2 L1146.8 932.6 L1148.4 933.6 L1150.0 934.2 L1151.5 938.1 L1153.1 938.5 L1154.7 937.6 L1156.3 939.3 L1157.9 939.1 L1159.5 938.5 L1161.1 937.1 L1162.7 937.6 L1164.3 939.0 L1165.9 939.5 L1167.5 938.5 L1169.1 939.2 L1170.7 937.9 L1172.3 938.2 L1173.9 938.3 L1175.5 938.6 L1177.1 937.3 L1178.7 939.0 L1180.3 939.3 L1181.9 937.5 L1183.5 937.4 L1185.1 938.6 L1186.7 937.9 L1188.3 936.7 L1189.9 938.9 L1191.5 938.4 L1193.1 938.0 L1193.5 944.5 L1195.1 943.1 L1196.7 942.4 L1198.3 943.0 L1199.9 942.2 L1200.0 944.8 L1201.6 945.6 L1203.2 944.9 L1204.8 945.0 L1206.4 946.5 L1208.0 945.9 L1209.6 945.9 L1211.2 945.7 L1212.8 945.6 L1214.4 946.3 L1216.0 945.3 L1217.6 946.6 L1219.2 944.6 L1220.8 945.1 L1222.4 944.3 L1224.0 945.1 L1225.6 945.7 L1227.2 946.3 L1228.8 944.8 L1230.4 945.3 L1232.0 945.0 L1233.5 933.2 L1235.1 932.9 L1236.6 932.5 L1236.7 933.7 L1237.3 838.6 L1238.0 932.5 L1238.3 932.5 L1239.9 933.8 L1241.5 933.7 L1243.1 933.2 L1244.7 933.0 L1246.3 932.7 L1247.9 935.0 L1249.5 932.8 L1251.1 934.8 L1252.7 934.1 L1254.3 933.4 L1255.9 932.9 L1256.8 939.1 L1258.4 939.5 L1260.0 937.7 L1261.6 938.1 L1263.2 939.1 L1264.8 938.6 L1266.4 939.7 L1268.0 937.9 L1269.6 938.7 L1270.8 942.1 L1272.4 944.4 L1274.0 942.5 L1275.6 941.4 L1277.2 942.9 L1278.8 942.9 L1280.4 944.3 L1282.0 942.7 L1283.6 943.0 L1285.2 943.4 L1286.8 944.1 L1288.4 942.9 L1289.4 937.7 L1291.0 937.3 L1292.6 936.7 L1294.2 937.0 L1295.8 937.0 L1297.4 936.3 L1299.0 937.8 L1300.6 936.0 L1302.2 937.8 L1303.8 937.6 L1305.4 936.9 L1307.0 936.4 L1308.6 936.8 L1310.2 937.3 L1311.8 937.5 L1313.4 937.1 L1315.0 937.6 L1316.6 936.6 L1318.2 937.1 L1319.8 935.8 L1321.4 937.5 L1323.0 937.0 L1324.6 936.7 L1326.2 937.8 L1327.8 937.4 L1329.4 935.0 L1331.0 937.0 L1332.6 935.9 L1334.2 937.7 L1335.8 938.7 L1337.4 936.6 L1339.0 937.0 L1340.6 936.8 L1340.7 930.2 L1342.3 930.4 L1343.9 930.9 L1345.5 929.3 L1347.1 931.1 L1348.7 929.3 L1350.3 930.2 L1351.9 930.8 L1353.5 930.5 L1355.1 929.3 L1356.7 929.5 L1358.3 929.7 L1359.9 929.9 L1361.5 930.8 L1363.1 929.1 L1364.7 930.3 L1366.3 930.4 L1367.9 930.4 L1369.5 930.3 L1371.0 938.0 L1372.6 937.3 L1374.2 937.5 L1375.8 937.3 L1377.4 938.2 L1379.0 935.6 L1380.3 932.3 L1381.9 931.2 L1383.5 931.2 L1385.1 930.7 L1386.7 930.1 L1388.3 931.1 L1389.9 930.9 L1391.5 931.7 L1393.1 930.3 L1394.7 932.4 L1396.3 931.6 L1397.9 931.2 L1399.5 930.9 L1401.1 930.8 L1402.7 930.6 L1404.3 931.0 L1405.9 931.4 L1407.5 931.3 L1409.1 930.4 L1410.7 931.2 L1412.3 930.7 L1413.9 931.5 L1415.5 932.7 L1417.1 931.8 L1418.7 931.2 L1420.3 930.2 L1421.9 930.4 L1423.5 930.2 L1424.5 935.6 L1426.1 934.6 L1427.7 935.1 L1429.3 934.7 L1430.9 935.2 L1432.5 936.1 L1434.1 934.6 L1435.7 934.8 L1437.3 934.5 L1438.9 935.7 L1440.5 934.4 L1442.1 934.3 L1443.7 934.1 L1445.3 934.1 L1446.9 935.4 L1448.5 936.9 L1450.1 934.4 L1450.2 929.7 L1451.8 929.2 L1453.4 928.3 L1455.0 928.9 L1456.6 928.9 L1458.2 928.6 L1459.8 930.4 L1461.4 927.7 L1463.0 929.3 L1464.6 929.3 L1466.2 928.6 L1467.8 929.2 L1469.4 929.7 L1471.0 929.2 L1472.6 929.3 L1474.2 929.5 L1474.8 940.6 L1476.4 943.1 L1478.0 943.6 L1479.6 942.7 L1481.2 942.8 L1482.8 941.1 L1484.4 942.0 L1486.0 941.5 L1487.6 941.6 L1489.2 942.7 L1490.8 941.5 L1492.4 942.0 L1494.0 940.7 L1495.6 941.9 L1497.2 942.1 L1498.8 941.6 L1500.4 941.5 L1502.0 943.4 L1503.6 941.2 L1505.2 941.3 L1506.8 941.5 L1508.4 942.9 L1510.0 943.5 L1511.6 942.3 L1513.2 941.5 L1514.8 941.7 L1516.4 942.8 L1518.0 941.4 L1519.6 943.1 L1521.2 943.0 L1522.8 942.1 L1524.4 942.5 L1526.0 942.6 L1527.6 943.1 L1529.2 941.3 L1530.8 942.9 L1532.4 941.8 L1534.0 941.5 L1535.6 942.1 L1537.2 941.9 L1538.8 941.4 L1540.4 940.9 L1542.0 941.4 L1543.6 943.1 L1545.2 943.4 L1545.6 937.4 L1547.2 937.8 L1548.8 936.6 L1550.4 936.9 L1552.0 937.1 L1553.6 936.2 L1555.2 936.2 L1556.8 937.0 L1558.0 930.6 L1558.4 936.7 L1558.7 926.7 L1559.4 930.6 L1559.6 930.6 L1561.2 931.6 L1562.8 931.2 L1564.4 932.1 L1566.0 931.4 L1567.6 931.2 L1569.2 931.5 L1570.8 931.3 L1572.4 930.9 L1574.0 931.1 L1575.6 931.9 L1577.2 931.8 L1578.8 932.3 L1580.4 930.2 L1582.0 931.1 L1583.6 931.1 L1585.2 931.5 L1586.8 931.1 L1587.6 941.7 L1589.2 942.6 L1590.8 942.2 L1592.4 941.2 L1594.0 943.0 L1595.6 942.7 L1597.2 941.6 L1598.8 942.6 L1600.4 941.5 L1602.0 942.8 L1603.6 941.9 L1605.2 941.5 L1606.8 941.8 L1608.4 941.5 L1610.0 942.2 L1611.6 942.2 L1613.2 942.1 L1614.8 941.7 L1616.4 939.5 L1618.0 942.1 L1619.6 940.7 L1621.2 942.2 L1622.8 942.8 L1624.4 942.2 L1626.0 941.8 L1627.6 941.9 L1629.2 942.0 L1630.8 941.7 L1632.4 941.6 L1634.0 941.4 L1635.6 942.9 L1637.2 942.0 L1638.8 942.7 L1640.4 941.9 L1642.0 942.1 L1643.6 941.9 L1645.2 942.4 L1646.8 942.6 L1648.4 942.2 L1650.0 941.6 L1651.6 941.5 L1653.2 943.2 L1654.8 941.9 L1656.4 941.8 L1658.0 943.1 L1659.6 942.8 L1661.2 942.4 L1662.8 941.8 L1664.4 943.7 L1664.4 928.4 L1666.0 928.5 L1667.6 928.0 L1669.2 927.1 L1670.8 927.2 L1672.4 928.4 L1674.0 928.4 L1675.6 928.0 L1677.2 927.3 L1678.8 927.1 L1680.4 927.9 L1682.0 927.1 L1683.6 928.8 L1685.2 928.9 L1685.4 932.0 L1687.0 930.6 L1688.6 929.6 L1690.2 929.4 L1691.8 927.6 L1693.4 929.6 L1695.0 929.9 L1696.6 930.7 L1698.2 930.4 L1699.8 930.4 L1701.4 930.1 L1703.0 930.4 L1704.6 931.0 L1706.2 929.2 L1707.8 929.7 L1709.4 929.0 L1711.0 931.1 L1712.6 930.9 L1714.2 930.5 L1715.8 929.1 L1717.4 930.1 L1719.0 929.8 L1720.6 930.0 L1722.2 929.9 L1723.8 930.3 L1725.4 929.7 L1727.0 930.6 L1728.6 930.2 L1730.2 929.8 L1731.0 932.7 L1732.6 932.5 L1734.2 933.3 L1735.8 932.6 L1737.4 933.0 L1739.0 932.5 L1740.6 931.7 L1742.2 933.4 L1743.6 928.3 L1745.2 929.5 L1746.8 929.3 L1748.4 927.9 L1750.0 928.4 L1751.6 928.7 L1753.2 928.5 L1754.8 928.2 L1756.4 929.6 L1758.0 928.9 L1759.6 929.3 L1759.9 933.4 L1761.5 933.9 L1763.1 933.2 L1764.7 933.7 L1766.3 934.1 L1766.7 924.1 L1766.9 924.4 L1767.4 918.8 L1768.1 924.1 L1768.5 924.1 L1770.1 923.7 L1771.7 924.5 L1773.3 924.7 L1774.9 924.2 L1776.5 923.9 L1777.6 920.2 L1779.2 921.5 L1780.8 919.6 L1782.3 929.3 L1783.9 929.3 L1785.5 927.3 L1787.1 929.1 L1788.7 928.6 L1788.8 817.7 L1790.4 816.6 L1792.0 816.2 L1793.6 816.6 L1795.2 816.9 L1796.8 816.4 L1798.4 816.7 L1800.0 815.8 L1801.6 816.6 L1803.2 817.3 L1804.8 818.2 L1805.1 929.5 L1806.7 929.2 L1808.3 929.9 L1809.9 929.8 L1811.5 930.2 L1813.1 929.8 L1814.7 929.0 L1816.3 929.2 L1817.9 929.2 L1819.5 929.3 L1820.5 933.8 L1822.1 933.1 L1823.7 932.2 L1825.3 933.2 L1826.9 932.3 L1828.5 933.7 L1829.8 940.7 L1831.4 939.5 L1833.0 941.1 L1834.6 941.3 L1836.2 940.7 L1837.8 941.8 L1839.4 942.0 L1841.0 939.8 L1841.4 938.1 L1843.0 937.7 L1844.6 937.7 L1846.2 938.1 L1847.8 936.9 L1849.4 937.0 L1851.0 936.8 L1852.6 936.9 L1854.2 937.3 L1855.8 936.4 L1857.4 936.7 L1859.0 937.8 L1860.6 937.4 L1862.2 937.7 L1863.8 936.1 L1865.4 936.9 L1867.0 937.0 L1868.6 937.4 L1870.2 937.0 L1871.8 938.1 L1873.4 937.4 L1875.0 937.4 L1876.6 937.4 L1878.2 937.9 L1879.8 937.1 L1881.4 938.2 L1883.0 937.7 L1884.6 937.5 L1885.7 931.4 L1887.3 931.7 L1888.9 932.1 L1890.5 932.0 L1892.1 931.6 L1893.7 932.0 L1895.3 931.5 L1896.9 932.3 L1898.5 931.4 L1900.1 929.9 L1901.7 932.3 L1903.3 931.5 L1904.9 930.6 L1906.5 931.2 L1908.1 930.8 L1909.7 932.8 L1911.3 931.7 L1912.9 930.3 L1914.5 931.8 L1916.0 938.1 L1917.6 939.7 L1919.2 937.6 L1920.8 936.8 L1922.4 938.4 L1924.0 938.1 L1925.6 938.0 L1927.2 936.8 L1928.8 938.6 L1930.4 939.5 L1932.0 937.0 L1933.6 939.2 L1934.4 937.9 L1935.1 923.5 L1935.2 937.9 L1935.8 937.9 L1936.8 940.0 L1938.4 938.6 L1940.0 938.2 L1941.6 939.1 L1943.2 938.7 L1944.8 937.9 L1946.4 938.8 L1947.2 822.0 L1948.8 821.1 L1950.4 823.8 L1951.4 931.1 L1953.0 930.9 L1954.6 931.6 L1956.0 888.5 L1957.6 888.7 L1959.2 889.3 L1960.8 889.3 L1962.4 889.7 L1964.0 890.4 L1965.6 889.3 L1967.2 890.0 L1968.8 890.0 L1969.6 930.6 L1971.2 931.5 L1972.8 930.7 L1974.4 932.1 L1976.0 931.7 L1977.6 931.4 L1979.2 930.4 L1980.8 931.5 L1982.4 930.8 L1984.0 931.9 L1985.6 931.3 L1987.2 930.8 L1988.2 920.4 L1989.8 920.3 L1991.4 919.4 L1993.0 920.6 L1994.6 919.6 L1995.2 909.4 L1996.8 909.7 L1998.4 909.0 L2000.0 909.3 L2001.6 909.5 L2003.2 910.6 L2004.8 910.6 L2006.4 909.4 L2008.0 910.7 L2009.6 909.5 L2011.2 909.8 L2012.8 910.2 L2014.4 909.8 L2016.0 911.3 L2017.6 909.7 L2019.2 908.7 L2020.8 910.5 L2020.8 919.5 L2022.4 919.6 L2024.0 917.7 L2025.6 920.5 L2027.2 920.3 L2027.8 925.9 L2029.4 926.0 L2031.0 926.5 L2032.6 925.3 L2034.2 926.0 L2035.8 924.8 L2037.4 925.1 L2039.0 926.1 L2040.6 925.6 L2041.5 930.2 L2042.2 924.4 L2042.2 904.9 L2042.9 930.2 L2043.2 930.2 L2044.8 929.9 L2046.4 929.4 L2048.0 930.3 L2049.6 929.7 L2051.2 928.9 L2052.8 929.2 L2054.4 931.2 L2056.0 928.9 L2057.6 930.1 L2059.2 930.4 L2060.8 930.4 L2062.4 929.1 L2064.0 929.8 L2065.6 930.1 L2067.2 930.5 L2067.4 933.2 L2069.0 932.9 L2070.6 934.4 L2072.2 934.5 L2073.8 934.0 L2075.4 933.3 L2077.0 934.0 L2078.6 933.8 L2080.2 934.3 L2081.8 932.8 L2083.4 933.8 L2085.0 933.6 L2086.6 932.9 L2088.2 933.8 L2089.8 933.7 L2091.4 933.4 L2093.0 934.0 L2093.7 930.4 L2094.4 729.6 L2095.1 930.4 L2095.3 930.4 L2096.9 931.3 L2098.5 931.7 L2100.1 931.6 L2101.7 932.1 L2102.3 918.9 L2103.9 918.7 L2105.5 919.9 L2107.1 920.1 L2108.7 921.3 L2109.3 915.6 L2110.9 914.5 L2112.5 915.7 L2114.1 914.5 L2115.7 914.1 L2117.3 917.0 L2117.9 915.4 L2118.6 889.6 L2118.9 915.4 L2119.3 915.4 L2120.5 915.6 L2122.1 915.5 L2123.7 916.4 L2125.3 915.3 L2126.9 916.0 L2128.5 914.4 L2130.1 914.2 L2130.3 919.8 L2131.9 919.9 L2132.4 919.2 L2133.1 894.3 L2133.5 919.2 L2133.8 919.2 L2135.1 919.0 L2135.6 919.0 L2136.3 894.3 L2136.7 919.0 L2137.0 919.0 L2138.3 918.4 L2139.9 919.9 L2141.5 919.3 L2143.1 919.2 L2144.7 919.1 L2146.3 919.6 L2147.9 919.2 L2149.5 919.4 L2151.1 918.0 L2152.7 919.2 L2154.3 920.4 L2155.9 918.5 L2157.5 918.8 L2159.1 919.5 L2160.7 919.5 L2162.3 919.3 L2163.9 917.7 L2165.5 919.2 L2167.1 918.0 L2168.7 918.3 L2170.3 919.2 L2171.9 918.6 L2173.5 919.4 L2175.2 919.7 L2175.9 891.9 L2176.6 919.7 L2176.8 919.7 L2178.4 918.0 L2180.0 918.0 L2181.0 865.8 L2182.6 866.0 L2184.2 865.7 L2185.8 866.0 L2187.4 865.7 L2188.0 884.5 L2189.6 884.8 L2191.2 884.3 L2192.8 884.0 L2194.4 884.0 L2195.0 913.1 L2196.6 912.9 L2196.9 862.5 L2198.5 862.5 L2200.1 861.5 L2201.7 862.2 L2202.0 884.0 L2203.6 886.6 L2205.2 885.8 L2206.8 884.8 L2208.4 884.2 L2210.0 885.2 L2211.6 883.7 L2213.2 884.4 L2214.1 908.7 L2215.7 908.2 L2217.3 907.8 L2218.9 908.8 L2220.5 907.4 L2222.1 908.4 L2223.7 907.8 L2225.3 907.6 L2226.9 908.5 L2228.5 907.5 L2230.1 909.5 L2230.4 903.1 L2232.0 904.9 L2233.6 902.8 L2235.2 904.0 L2236.8 902.7 L2238.4 902.6 L2240.0 903.6 L2241.6 904.0 L2243.2 902.6 L2244.4 911.3 L2246.0 909.9 L2247.6 910.6 L2249.2 910.8 L2250.8 910.9 L2252.4 909.2 L2254.0 911.6 L2255.6 910.9 L2257.2 910.2" stroke="#f2c94c" stroke-width="2" fill="none" stroke-linejoin="round"/>
<path d="M126.7 967.9 L476.7 967.9 L477.5 947.6 L478.3 967.9 L479.0 967.9 L479.8 945.3 L480.6 967.9 L541.9 967.9 L542.7 945.3 L543.5 967.9 L553.5 967.9 L554.3 945.3 L555.1 967.9 L668.6 967.9 L669.4 960.6 L670.2 967.9 L822.8 967.9 L823.6 947.6 L824.4 967.9 L836.3 967.9 L837.1 943.0 L837.9 967.9 L1097.6 967.9 L1098.4 945.3 L1099.2 967.9 L1290.0 967.9 L1290.8 958.3 L1291.6 967.9 L1341.3 967.9 L1342.1 960.6 L1342.9 967.9 L1803.4 967.9 L1804.2 859.5 L1805.0 967.9 L1968.8 967.9 L1969.6 933.7 L1970.4 967.9 L2137.9 967.9 L2138.7 949.9 L2139.5 967.9 L2192.8 967.9 L2193.6 938.3 L2194.4 967.9 L2214.7 967.9 L2215.5 946.7 L2216.3 967.9 L2231.0 967.9 L2231.8 943.0 L2232.6 967.9 L2248.1 967.9 L2253.7 963.0 L2257.4 965.0" stroke="#37a03a" stroke-width="2" fill="none" stroke-linejoin="round"/>
<path d="M126.7 965.2H2257.4" stroke="#d0263a" stroke-width="3" fill="none"/>
<path d="M126.7 964.3 L127.8 965.2 L128.9 963.2 L130.0 964.0 L131.1 960.2 L132.2 965.6 L133.3 963.5 L134.4 964.9 L135.5 964.2 L136.6 965.2 L137.7 964.8 L138.8 964.6 L139.9 964.4 L141.0 964.4 L142.1 964.7 L143.2 965.9 L144.3 958.6 L145.4 960.4 L146.5 964.8 L147.6 964.7 L148.7 963.5 L149.8 964.2 L150.9 961.8 L152.0 963.7 L153.1 964.4 L154.2 965.8 L155.3 965.0 L156.4 965.8 L157.5 964.9 L158.6 965.8 L159.7 964.5 L160.0 965.0 L160.7 938.3 L160.8 965.9 L161.4 965.0 L161.9 965.0 L163.0 961.7 L164.1 964.7 L165.2 964.7 L166.3 964.4 L167.4 965.3 L168.5 963.4 L169.6 964.8 L170.7 959.5 L171.8 964.6 L172.9 965.3 L173.1 965.0 L173.8 940.7 L174.0 964.7 L174.5 965.0 L175.1 963.9 L176.2 964.1 L177.3 965.9 L178.4 965.7 L179.5 964.2 L180.6 965.0 L181.7 964.3 L182.8 965.6 L183.9 966.0 L185.0 962.8 L186.1 963.9 L187.2 964.8 L188.3 963.8 L189.4 965.7 L190.5 964.8 L191.6 965.3 L192.7 961.2 L193.8 964.9 L194.9 959.8 L196.0 965.5 L197.1 965.6 L198.2 965.5 L199.3 965.1 L199.6 965.0 L200.3 960.6 L200.4 965.5 L201.0 965.0 L201.5 964.7 L202.6 963.3 L203.7 965.6 L204.8 966.0 L205.9 963.6 L207.0 964.4 L208.1 965.9 L209.2 965.1 L210.3 964.3 L211.4 965.0 L212.5 962.4 L213.6 964.0 L214.7 963.0 L215.8 964.9 L216.9 964.7 L218.0 964.4 L219.1 965.7 L220.2 965.6 L221.3 965.0 L222.4 963.2 L223.5 965.4 L224.6 964.6 L225.7 965.0 L226.8 964.9 L227.9 965.8 L229.0 965.3 L230.1 965.8 L231.2 965.9 L232.3 965.7 L233.4 965.4 L234.5 965.2 L235.6 964.8 L236.7 964.8 L237.8 963.3 L238.9 965.0 L240.0 963.5 L241.1 961.7 L242.2 964.9 L242.2 938.6 L243.3 964.9 L243.3 963.6 L244.4 963.4 L244.4 941.9 L245.5 961.8 L245.5 963.7 L246.6 961.9 L246.6 945.5 L247.7 960.6 L247.7 958.0 L248.8 963.5 L248.8 948.3 L249.9 964.5 L249.9 961.2 L251.0 965.6 L252.1 965.4 L253.2 964.6 L254.3 964.7 L255.4 964.2 L256.5 965.6 L257.6 964.4 L258.7 964.2 L259.8 965.4 L260.9 965.7 L262.0 963.9 L263.1 964.1 L264.2 965.5 L265.3 963.6 L266.4 965.9 L267.5 964.8 L268.6 964.9 L269.7 965.9 L270.8 964.9 L271.9 964.5 L273.0 964.9 L274.1 964.4 L275.2 965.9 L276.3 964.6 L277.4 961.4 L278.5 965.2 L279.6 964.2 L280.7 965.1 L281.8 964.5 L282.9 960.1 L284.0 963.9 L285.1 965.6 L286.2 965.7 L287.3 965.4 L288.4 966.0 L289.5 963.7 L290.6 964.5 L291.7 964.7 L292.8 964.9 L293.9 963.8 L295.0 965.5 L296.1 965.6 L297.2 964.1 L298.3 965.4 L299.4 965.6 L300.5 965.3 L301.6 962.9 L302.7 964.6 L303.8 964.1 L304.9 965.1 L306.0 964.8 L307.1 964.8 L308.2 965.9 L309.3 966.0 L310.4 963.3 L311.5 965.9 L312.6 963.6 L313.7 965.5 L314.8 965.4 L315.9 966.0 L317.0 962.7 L318.1 965.2 L319.2 965.0 L320.3 965.8 L321.4 965.7 L322.5 964.5 L323.6 964.2 L324.7 963.9 L325.8 964.3 L326.9 965.2 L328.0 964.5 L329.1 965.3 L330.2 964.0 L331.3 964.1 L332.4 963.1 L333.5 965.6 L334.6 963.7 L335.7 965.4 L336.8 965.4 L337.7 950.1 L337.9 963.1 L338.8 958.7 L339.0 962.3 L339.9 948.3 L340.1 963.4 L341.0 958.6 L341.2 965.6 L342.1 945.2 L342.3 965.9 L343.2 959.0 L343.4 965.6 L344.3 946.9 L344.5 965.5 L345.4 959.1 L345.6 959.5 L346.5 949.5 L346.7 962.6 L347.6 964.5 L347.8 965.5 L348.7 950.7 L348.9 964.7 L349.8 964.7 L350.0 964.0 L351.1 965.1 L352.2 963.3 L353.3 965.6 L354.4 959.6 L355.5 965.2 L356.6 962.8 L357.7 964.3 L358.8 963.3 L359.9 965.6 L361.0 965.0 L362.1 965.3 L363.2 964.2 L364.3 964.4 L365.4 964.7 L366.5 964.2 L367.6 965.0 L368.7 965.8 L369.8 964.9 L370.9 965.0 L372.0 966.0 L373.1 964.5 L374.2 965.9 L375.3 964.6 L376.4 963.8 L377.5 963.5 L378.6 964.8 L379.7 958.6 L380.8 965.5 L381.9 965.8 L383.0 965.2 L384.1 965.3 L385.2 963.8 L386.3 962.0 L387.4 964.6 L388.5 962.3 L389.6 966.0 L390.7 966.0 L391.8 964.8 L392.9 963.1 L394.0 964.1 L395.1 965.9 L396.2 965.7 L397.3 965.1 L398.4 965.7 L399.5 964.9 L400.6 965.3 L401.7 965.9 L402.8 964.9 L403.9 964.9 L405.0 965.8 L406.1 965.8 L407.2 964.1 L408.3 963.5 L409.4 965.8 L410.5 963.8 L411.6 964.2 L412.7 964.8 L413.8 965.2 L413.9 965.0 L414.6 915.1 L414.9 966.0 L415.3 965.0 L416.0 965.6 L417.1 965.7 L418.2 965.1 L419.3 965.9 L420.4 962.7 L421.5 962.4 L422.6 965.9 L423.7 965.3 L424.8 964.3 L425.9 963.8 L427.0 962.5 L428.1 965.4 L429.2 962.7 L430.3 965.1 L431.4 965.9 L432.5 965.2 L433.6 962.7 L434.7 964.1 L435.8 965.3 L436.9 965.8 L438.0 965.7 L439.1 963.8 L440.2 964.7 L441.3 962.2 L442.4 965.0 L443.5 965.5 L444.6 965.0 L445.7 965.4 L446.8 964.5 L447.9 965.6 L449.0 965.3 L450.1 964.4 L451.2 966.0 L452.3 962.7 L453.4 965.9 L454.5 960.9 L455.6 959.2 L456.7 965.2 L457.8 965.2 L458.9 959.1 L459.5 965.0 L460.0 965.8 L460.2 940.7 L460.9 965.0 L461.1 965.7 L462.2 962.9 L463.3 963.8 L464.4 963.0 L465.5 965.6 L466.6 961.5 L467.7 961.9 L468.8 961.0 L469.8 965.0 L469.9 965.5 L470.5 938.3 L471.0 964.9 L471.2 965.0 L472.1 965.9 L473.2 964.2 L473.5 965.0 L474.2 945.3 L474.3 964.5 L474.9 965.0 L475.4 964.9 L476.5 965.0 L477.6 964.4 L478.7 964.2 L479.8 966.0 L480.9 963.8 L482.0 963.8 L483.1 963.8 L484.2 964.9 L485.3 965.8 L486.4 965.3 L487.5 965.9 L488.6 966.0 L489.7 965.5 L490.8 960.4 L491.9 962.5 L493.0 965.6 L494.1 965.0 L495.2 963.9 L496.3 964.8 L497.4 964.8 L498.5 964.8 L499.6 965.7 L500.7 963.5 L501.8 965.5 L502.9 964.2 L504.0 963.9 L505.1 965.4 L506.2 962.0 L507.3 964.8 L508.4 965.8 L509.5 964.6 L510.6 965.6 L511.7 963.8 L512.8 964.5 L513.9 965.8 L515.0 965.5 L516.1 965.8 L517.2 964.4 L518.3 964.4 L519.4 965.5 L520.5 966.0 L521.6 965.6 L522.7 965.1 L523.8 964.5 L524.9 965.9 L526.0 965.3 L527.1 965.5 L528.2 963.7 L529.3 964.4 L530.4 964.8 L531.5 965.3 L532.6 963.5 L533.7 965.9 L534.8 964.6 L535.9 963.9 L537.0 964.4 L538.1 965.0 L539.2 965.7 L540.3 965.8 L541.4 964.4 L542.5 965.2 L543.6 964.4 L544.7 965.2 L545.8 962.8 L546.9 965.5 L548.0 965.7 L549.0 965.0 L549.1 965.6 L549.7 938.3 L550.2 964.9 L550.4 965.0 L551.3 965.3 L552.4 966.0 L553.5 963.3 L554.6 965.0 L555.7 965.1 L556.8 965.6 L557.4 965.0 L557.9 963.7 L558.1 945.3 L558.8 965.0 L559.0 965.9 L560.1 964.6 L561.2 958.6 L562.3 966.0 L563.4 960.6 L564.5 964.8 L565.6 964.7 L566.7 965.6 L567.8 965.7 L568.9 965.0 L570.0 964.5 L571.1 964.9 L572.2 965.2 L573.3 961.8 L574.4 965.9 L575.5 961.1 L576.6 964.9 L577.7 963.7 L578.8 964.1 L579.9 965.9 L581.0 965.5 L581.6 965.0 L582.1 963.0 L582.3 954.6 L583.0 965.0 L583.2 962.0 L584.3 964.6 L585.4 960.1 L586.5 965.0 L587.6 965.4 L588.7 965.2 L589.8 966.0 L590.9 963.5 L592.0 963.0 L593.1 965.4 L594.2 964.0 L595.3 964.6 L596.4 965.3 L597.5 965.5 L598.6 963.2 L599.7 965.2 L600.8 965.9 L601.9 964.6 L603.0 965.5 L604.1 960.1 L605.2 965.8 L606.3 965.6 L607.4 959.0 L608.5 966.0 L609.6 965.0 L610.7 965.7 L611.8 964.5 L612.9 964.0 L614.0 964.9 L615.1 964.0 L616.2 964.3 L617.3 966.0 L618.4 964.4 L619.5 964.1 L620.6 965.7 L621.7 964.1 L622.8 965.0 L623.9 960.0 L625.0 965.7 L626.1 963.2 L627.2 965.8 L628.3 965.0 L629.4 965.8 L630.5 965.3 L631.6 962.4 L632.7 963.7 L633.8 965.0 L634.9 964.1 L636.0 960.2 L637.1 965.3 L638.2 964.1 L639.3 965.5 L640.4 963.6 L641.5 965.2 L642.6 965.3 L643.7 964.7 L644.8 964.8 L645.9 964.5 L647.0 963.7 L648.1 965.6 L649.2 965.9 L650.3 965.9 L651.4 965.3 L652.5 963.7 L653.6 965.3 L654.7 964.8 L655.8 964.0 L656.9 963.7 L658.0 965.5 L659.1 963.2 L660.2 965.0 L661.3 965.0 L662.4 966.0 L663.5 963.5 L664.6 963.8 L665.7 964.9 L666.8 962.4 L667.9 963.9 L669.0 961.9 L670.1 964.4 L671.2 965.0 L672.3 963.7 L673.4 959.8 L674.5 965.0 L675.6 964.4 L676.7 964.1 L677.8 963.9 L678.9 962.3 L680.0 964.3 L681.1 965.8 L682.2 964.9 L683.3 963.7 L684.4 965.5 L685.5 962.9 L686.6 965.4 L687.7 962.8 L688.8 964.8 L689.9 964.2 L691.0 965.4 L692.0 965.0 L692.1 965.8 L692.7 938.3 L693.2 964.7 L693.4 965.0 L694.3 965.4 L695.4 963.5 L696.5 962.2 L697.6 964.5 L698.7 961.7 L698.7 943.5 L699.8 964.9 L699.8 960.3 L700.9 959.9 L700.9 948.2 L702.0 965.1 L702.0 964.5 L703.1 963.2 L703.1 946.4 L704.2 963.2 L704.2 962.2 L705.3 966.0 L706.4 965.9 L707.5 965.9 L708.6 965.7 L709.7 960.2 L710.8 964.4 L711.9 965.3 L713.0 965.8 L714.1 966.0 L715.2 965.8 L716.3 965.7 L717.4 964.4 L718.5 963.6 L719.6 965.7 L720.7 965.9 L721.8 964.4 L722.9 964.7 L724.0 964.3 L725.1 965.0 L725.1 962.7 L725.8 961.5 L726.2 964.9 L726.5 965.0 L727.3 964.3 L728.4 965.6 L729.5 961.6 L730.6 963.2 L731.7 963.3 L732.8 960.5 L733.9 965.8 L735.0 964.3 L736.1 965.9 L737.2 961.4 L738.3 962.5 L739.4 964.3 L740.5 965.8 L741.6 964.6 L742.7 964.3 L743.8 965.8 L744.9 965.4 L746.0 962.2 L747.1 961.4 L748.2 965.9 L749.3 964.9 L750.4 965.9 L751.5 964.1 L752.6 965.3 L753.7 965.8 L754.8 965.3 L755.9 964.2 L757.0 964.4 L758.1 965.3 L759.2 965.5 L760.3 964.2 L761.4 965.8 L762.5 965.6 L763.6 965.4 L764.7 965.8 L765.8 964.7 L766.9 963.5 L768.0 962.6 L769.1 965.4 L770.2 965.4 L771.3 965.6 L772.4 964.0 L773.5 960.3 L773.5 965.0 L774.2 827.0 L774.6 965.9 L774.9 965.0 L775.7 965.6 L776.8 965.8 L777.9 964.4 L779.0 964.9 L780.1 964.9 L781.2 965.1 L782.3 965.8 L783.4 964.2 L784.5 962.1 L785.6 964.4 L786.7 964.5 L787.8 965.0 L788.9 965.6 L790.0 962.1 L791.1 965.9 L792.2 959.6 L793.3 962.8 L794.4 965.5 L795.5 963.6 L796.6 964.1 L797.7 958.4 L798.8 964.4 L799.9 963.3 L801.0 963.4 L802.1 963.9 L803.2 965.8 L804.3 965.1 L805.4 963.1 L806.5 965.5 L807.6 964.9 L808.7 965.7 L809.8 961.9 L810.9 965.4 L812.0 966.0 L813.1 965.4 L814.2 965.5 L815.3 963.0 L816.4 965.4 L817.5 965.7 L818.6 965.0 L819.7 964.8 L820.8 963.7 L821.9 964.2 L823.0 964.5 L824.1 965.8 L825.2 961.7 L826.3 962.9 L827.1 965.0 L827.4 962.2 L827.8 938.3 L828.5 965.0 L828.5 965.4 L829.6 964.9 L830.7 964.2 L831.8 960.9 L832.9 965.3 L834.0 963.4 L835.1 964.5 L836.2 963.5 L836.9 965.0 L837.3 961.3 L837.6 943.0 L838.3 965.0 L838.4 963.6 L839.5 965.5 L840.6 962.5 L841.7 963.7 L842.8 965.7 L843.9 964.2 L845.0 965.9 L846.1 965.4 L847.2 965.3 L848.3 963.6 L849.4 963.7 L849.4 965.0 L850.1 949.9 L850.5 962.6 L850.8 965.0 L851.6 964.5 L852.7 963.2 L853.8 959.4 L854.9 963.8 L856.0 966.0 L857.1 965.8 L858.2 965.8 L859.3 965.2 L860.4 965.5 L861.5 965.3 L862.6 965.5 L863.7 964.7 L864.8 965.5 L865.9 965.8 L867.0 963.9 L868.1 965.4 L869.2 965.8 L870.3 965.1 L871.4 965.4 L872.5 964.3 L873.6 965.2 L874.7 963.1 L875.8 963.8 L876.9 965.9 L878.0 960.6 L879.1 964.6 L880.2 965.2 L881.3 965.8 L882.4 963.6 L883.5 963.1 L884.6 965.4 L885.7 964.8 L886.8 964.7 L887.9 958.5 L889.0 964.3 L890.1 965.1 L891.2 965.4 L892.3 965.3 L893.4 961.2 L894.5 965.1 L895.6 962.7 L896.7 964.5 L897.8 963.1 L898.9 965.3 L900.0 965.9 L901.1 964.5 L902.2 965.4 L903.3 965.0 L904.4 965.4 L905.5 965.4 L905.8 965.0 L906.5 905.9 L906.6 965.0 L907.2 965.0 L907.7 965.5 L908.8 964.4 L909.9 966.0 L911.0 963.8 L912.1 965.5 L913.2 964.6 L914.3 963.3 L915.4 965.4 L916.5 965.4 L917.6 962.4 L918.7 959.8 L919.8 965.3 L920.9 962.5 L922.0 960.1 L923.1 965.1 L924.2 964.8 L925.3 965.4 L926.4 962.3 L927.5 964.8 L928.6 963.6 L929.7 965.5 L930.8 962.9 L931.9 965.9 L933.0 965.3 L934.1 965.8 L935.2 964.1 L936.3 965.9 L937.4 965.3 L938.5 964.4 L939.6 965.5 L940.7 964.0 L941.8 964.3 L942.9 963.5 L944.0 964.4 L945.1 963.4 L946.2 964.3 L947.3 965.0 L948.4 964.9 L949.5 961.9 L950.6 964.1 L951.7 965.9 L952.8 965.8 L953.9 964.6 L955.0 961.6 L956.1 965.0 L957.2 965.6 L958.3 961.9 L959.4 962.6 L960.5 965.6 L961.6 965.7 L962.7 965.6 L963.8 965.3 L964.9 964.9 L966.0 964.9 L967.1 965.9 L968.2 965.8 L969.3 964.4 L970.4 965.0 L971.5 965.7 L972.6 964.4 L973.7 964.0 L974.8 965.5 L975.9 964.1 L977.0 965.7 L978.1 963.7 L979.2 965.8 L980.3 965.5 L981.4 963.8 L982.5 965.1 L983.6 963.7 L983.6 965.0 L984.3 940.7 L984.7 965.5 L985.0 965.0 L985.8 964.8 L986.9 964.9 L988.0 966.0 L989.1 965.7 L990.2 965.8 L991.3 964.9 L991.5 965.0 L992.2 951.3 L992.4 965.3 L992.9 965.0 L993.5 965.2 L994.6 965.8 L995.7 964.8 L996.8 965.6 L997.9 964.5 L999.0 964.4 L1000.1 962.6 L1001.2 962.1 L1002.3 962.2 L1003.4 965.5 L1004.5 964.2 L1005.6 966.0 L1006.7 963.9 L1007.8 965.7 L1008.9 965.0 L1010.0 965.8 L1011.1 961.4 L1012.2 961.0 L1013.3 965.9 L1014.4 965.1 L1015.5 965.2 L1016.6 965.4 L1017.7 965.3 L1018.8 964.8 L1019.9 965.8 L1021.0 963.7 L1022.1 965.1 L1023.2 963.2 L1024.3 965.5 L1025.4 961.1 L1026.5 965.1 L1027.6 964.8 L1028.7 965.9 L1029.8 963.7 L1030.9 965.9 L1032.0 965.8 L1033.1 964.2 L1034.2 965.0 L1035.3 964.6 L1036.4 964.5 L1037.5 962.0 L1038.6 965.5 L1039.7 963.3 L1040.8 965.3 L1041.9 964.6 L1043.0 965.0 L1044.1 965.8 L1045.2 964.6 L1046.3 962.9 L1047.4 964.5 L1048.5 958.6 L1049.6 963.9 L1050.7 964.2 L1051.8 964.3 L1052.9 965.7 L1054.0 965.6 L1055.1 965.5 L1056.2 964.0 L1057.3 964.8 L1058.4 966.0 L1059.5 965.2 L1060.6 964.9 L1061.7 965.2 L1062.8 964.9 L1063.9 964.5 L1065.0 964.2 L1066.1 964.5 L1067.2 965.2 L1068.3 965.0 L1069.4 961.7 L1070.5 964.7 L1071.6 965.6 L1072.7 960.7 L1073.8 965.5 L1074.9 963.8 L1076.0 965.1 L1077.1 964.9 L1078.2 963.7 L1079.3 965.0 L1080.4 959.1 L1081.5 963.7 L1082.6 959.3 L1083.7 962.7 L1084.8 965.9 L1085.9 964.6 L1087.0 964.4 L1088.1 963.3 L1089.2 963.7 L1090.3 963.5 L1091.4 965.5 L1092.5 963.6 L1093.6 965.4 L1094.7 963.5 L1095.8 962.3 L1096.9 964.5 L1098.0 962.6 L1099.1 963.2 L1100.2 964.9 L1101.3 965.6 L1102.4 965.2 L1103.5 965.5 L1104.6 964.7 L1105.7 965.6 L1106.8 961.9 L1107.9 965.7 L1109.0 961.4 L1110.1 961.9 L1111.2 964.8 L1112.3 961.3 L1113.4 965.1 L1114.5 964.0 L1115.6 965.0 L1116.7 963.0 L1117.8 963.7 L1118.9 965.1 L1120.0 964.1 L1121.1 965.9 L1122.2 964.5 L1122.4 965.0 L1123.1 868.7 L1123.3 965.2 L1123.8 965.0 L1124.4 965.4 L1125.5 964.6 L1126.6 965.0 L1127.7 965.8 L1128.8 964.5 L1129.9 964.7 L1131.0 964.2 L1132.1 960.0 L1133.2 964.5 L1134.3 964.3 L1135.4 965.6 L1136.5 964.6 L1137.6 963.2 L1138.7 964.9 L1139.8 964.8 L1140.9 964.5 L1142.0 964.9 L1143.1 965.0 L1144.2 963.5 L1145.3 963.8 L1146.4 962.3 L1147.5 965.5 L1148.6 965.7 L1149.7 964.4 L1150.8 966.0 L1151.9 965.9 L1153.0 964.3 L1154.1 964.4 L1155.2 964.3 L1156.3 965.2 L1157.4 963.7 L1158.5 964.2 L1159.6 964.4 L1160.7 964.7 L1161.8 963.5 L1162.9 965.3 L1164.0 964.1 L1165.1 964.7 L1166.2 965.9 L1167.3 965.2 L1168.4 962.3 L1169.5 965.5 L1170.6 965.3 L1171.7 964.2 L1172.8 965.1 L1173.9 964.7 L1175.0 964.4 L1176.1 966.0 L1177.2 964.9 L1178.3 962.3 L1179.4 963.5 L1180.5 964.8 L1181.6 964.4 L1182.7 962.8 L1183.8 963.2 L1184.9 965.1 L1186.0 965.2 L1187.1 965.4 L1188.2 964.2 L1189.3 965.4 L1190.4 964.3 L1191.5 957.1 L1192.6 965.7 L1193.7 964.5 L1194.8 960.0 L1195.9 965.6 L1197.0 963.8 L1198.1 963.2 L1199.2 964.3 L1200.3 964.6 L1201.4 964.1 L1202.5 965.3 L1203.6 965.1 L1204.7 965.3 L1205.8 964.2 L1206.9 965.3 L1208.0 965.6 L1209.1 965.4 L1210.2 965.2 L1211.3 963.9 L1212.4 965.7 L1213.5 961.6 L1214.6 965.0 L1215.7 965.9 L1216.8 958.6 L1217.9 965.5 L1219.0 965.6 L1220.1 964.9 L1221.2 964.9 L1222.3 965.3 L1223.4 965.0 L1224.5 964.8 L1225.6 965.1 L1226.7 965.1 L1227.8 963.3 L1228.9 965.0 L1230.0 964.9 L1231.1 965.4 L1231.9 965.0 L1232.2 965.4 L1232.6 952.3 L1233.3 964.1 L1233.3 965.0 L1234.4 964.3 L1235.5 965.1 L1236.6 965.0 L1236.6 965.7 L1237.3 868.7 L1237.7 963.9 L1238.0 965.0 L1238.8 963.3 L1239.9 965.3 L1241.0 960.6 L1242.1 965.5 L1243.2 962.7 L1244.3 963.5 L1245.4 965.9 L1246.5 965.8 L1247.6 965.9 L1248.7 965.0 L1249.8 965.1 L1250.9 963.5 L1252.0 964.3 L1253.1 965.2 L1254.2 965.3 L1255.3 963.2 L1256.4 964.5 L1257.5 965.5 L1258.6 963.0 L1259.7 965.7 L1260.8 965.1 L1261.9 965.9 L1263.0 964.0 L1264.1 964.7 L1265.2 964.0 L1266.3 965.7 L1267.4 959.4 L1268.5 964.4 L1269.6 964.8 L1270.7 965.6 L1271.8 965.1 L1272.9 965.2 L1274.0 965.8 L1275.1 962.6 L1276.2 965.7 L1277.3 964.6 L1278.4 965.3 L1279.5 965.9 L1280.6 963.3 L1281.7 966.0 L1282.8 964.1 L1283.9 962.6 L1285.0 958.2 L1286.1 964.9 L1287.2 965.9 L1288.3 965.0 L1289.4 965.7 L1290.5 965.0 L1291.6 964.7 L1292.7 964.5 L1293.8 964.4 L1294.9 963.2 L1296.0 964.4 L1297.1 963.3 L1298.2 963.8 L1299.3 964.2 L1300.4 965.7 L1301.5 965.7 L1302.6 964.1 L1303.7 964.0 L1304.8 965.2 L1305.9 963.9 L1307.0 965.4 L1308.1 966.0 L1309.2 965.3 L1310.3 963.7 L1311.4 964.7 L1312.5 965.8 L1313.6 965.0 L1314.7 965.4 L1315.8 965.8 L1316.9 964.4 L1318.0 963.7 L1319.1 964.8 L1320.2 964.0 L1321.3 965.4 L1322.4 965.5 L1323.5 965.5 L1324.6 965.5 L1325.7 965.2 L1326.8 963.4 L1327.9 965.7 L1329.0 964.5 L1330.1 965.2 L1331.2 963.1 L1332.3 965.9 L1333.4 964.0 L1334.5 965.3 L1335.6 965.2 L1336.7 964.9 L1337.8 965.8 L1338.9 963.1 L1340.0 964.2 L1341.1 958.9 L1342.2 964.4 L1343.3 965.6 L1344.4 964.7 L1345.5 965.0 L1346.6 965.5 L1347.7 963.4 L1348.8 965.4 L1349.9 964.4 L1351.0 961.9 L1352.1 965.7 L1353.2 965.7 L1354.3 964.2 L1355.4 965.2 L1356.5 963.9 L1357.6 964.4 L1358.7 965.6 L1359.8 965.1 L1360.9 964.9 L1362.0 965.2 L1363.1 963.9 L1364.2 964.4 L1365.3 963.1 L1366.4 965.4 L1367.5 964.2 L1368.6 965.3 L1369.7 964.5 L1370.8 964.7 L1371.9 964.6 L1373.0 964.9 L1374.1 963.6 L1375.2 963.9 L1376.3 965.2 L1377.4 965.7 L1378.5 964.7 L1379.6 965.7 L1380.7 964.2 L1381.0 965.0 L1381.7 956.0 L1381.8 963.7 L1382.4 965.0 L1382.9 964.5 L1384.0 963.9 L1385.1 964.6 L1386.2 963.1 L1387.3 960.1 L1388.4 965.9 L1389.5 965.6 L1390.6 964.9 L1391.7 964.3 L1392.8 962.6 L1393.9 966.0 L1395.0 962.5 L1396.1 960.1 L1397.2 963.5 L1398.3 964.9 L1399.4 964.7 L1400.5 966.0 L1401.6 964.5 L1402.7 965.7 L1403.8 965.4 L1404.9 965.4 L1406.0 965.5 L1407.1 965.9 L1408.2 963.7 L1409.3 964.8 L1410.4 965.6 L1411.5 962.1 L1412.6 964.9 L1413.7 964.8 L1414.8 964.5 L1415.9 962.8 L1417.0 964.2 L1418.1 964.5 L1419.2 964.3 L1420.3 965.3 L1421.4 965.6 L1422.5 964.0 L1423.6 966.0 L1424.7 965.8 L1425.8 965.1 L1426.9 963.4 L1428.0 964.3 L1429.1 965.8 L1430.2 963.8 L1431.3 964.7 L1432.4 965.1 L1433.5 964.8 L1434.6 964.6 L1435.7 965.4 L1436.8 965.5 L1437.9 965.0 L1439.0 965.2 L1440.1 964.6 L1441.2 965.5 L1442.3 962.3 L1443.4 964.1 L1444.5 965.2 L1445.6 964.3 L1446.7 965.7 L1447.8 964.7 L1448.9 963.9 L1450.0 965.1 L1451.1 964.4 L1452.2 963.8 L1453.3 965.9 L1454.4 964.3 L1455.5 964.3 L1456.6 965.7 L1457.7 964.9 L1458.8 965.7 L1459.9 964.8 L1461.0 964.3 L1462.1 964.4 L1463.2 964.0 L1464.3 965.2 L1465.4 964.4 L1466.5 965.7 L1467.6 963.7 L1468.7 966.0 L1469.8 965.5 L1470.9 965.7 L1472.0 962.9 L1473.1 965.5 L1474.2 963.9 L1475.3 963.7 L1476.4 962.0 L1477.5 961.3 L1478.6 961.0 L1479.7 965.9 L1480.8 965.7 L1481.9 963.4 L1483.0 963.5 L1484.1 965.5 L1485.2 965.2 L1486.3 965.4 L1487.4 964.6 L1488.5 963.9 L1489.6 965.2 L1490.7 966.0 L1491.8 964.3 L1492.9 964.5 L1494.0 965.3 L1495.1 960.6 L1496.2 965.6 L1497.3 966.0 L1498.4 965.8 L1499.5 965.0 L1500.6 965.7 L1501.7 965.5 L1502.8 965.5 L1503.9 965.1 L1505.0 964.4 L1506.1 965.2 L1507.2 965.3 L1508.3 965.6 L1509.4 965.3 L1510.5 962.4 L1511.6 964.8 L1512.7 960.8 L1513.8 965.6 L1514.9 964.2 L1516.0 965.8 L1517.1 963.1 L1518.2 964.5 L1519.3 965.0 L1520.4 965.1 L1521.5 965.8 L1522.6 964.5 L1523.7 965.8 L1524.8 961.3 L1525.9 965.8 L1527.0 964.6 L1528.1 965.5 L1529.2 961.6 L1530.3 962.8 L1531.4 961.5 L1532.5 962.3 L1533.6 963.9 L1534.7 963.0 L1535.8 964.6 L1536.9 965.6 L1538.0 964.4 L1539.1 964.8 L1540.2 965.2 L1541.3 964.5 L1542.4 958.4 L1543.5 962.7 L1544.6 965.5 L1545.7 964.9 L1546.8 963.7 L1547.9 965.0 L1549.0 965.6 L1550.1 964.3 L1551.2 963.6 L1552.3 964.3 L1553.4 958.6 L1554.5 965.0 L1555.6 965.1 L1556.7 966.0 L1557.8 964.1 L1558.9 965.1 L1560.0 965.4 L1561.1 964.8 L1562.2 957.9 L1563.3 964.8 L1564.4 965.3 L1565.5 963.5 L1566.6 963.8 L1567.7 964.2 L1568.8 965.4 L1569.9 965.0 L1571.0 964.9 L1572.1 965.5 L1573.2 960.5 L1574.3 963.6 L1575.4 964.8 L1576.5 965.4 L1577.6 965.0 L1578.7 964.7 L1579.8 964.3 L1580.9 965.4 L1582.0 959.5 L1583.1 962.6 L1584.2 963.5 L1585.3 964.1 L1586.4 964.7 L1587.5 965.8 L1588.6 961.8 L1589.7 960.0 L1590.8 964.6 L1591.9 964.5 L1593.0 965.4 L1594.1 964.4 L1595.2 965.8 L1596.3 963.7 L1597.4 963.2 L1598.5 965.7 L1599.6 963.8 L1600.7 965.3 L1601.8 964.9 L1602.9 963.1 L1604.0 965.5 L1605.1 963.8 L1606.2 963.6 L1607.3 964.6 L1608.4 962.2 L1609.5 965.8 L1610.6 961.6 L1611.7 965.4 L1612.8 963.3 L1613.9 963.0 L1615.0 961.2 L1616.1 964.9 L1617.2 964.1 L1618.3 965.3 L1619.4 965.3 L1620.5 965.4 L1621.6 964.9 L1622.7 964.4 L1623.8 965.4 L1624.9 965.9 L1626.0 963.7 L1627.1 965.5 L1628.2 964.6 L1629.3 965.1 L1630.4 964.2 L1631.5 957.1 L1632.6 963.0 L1633.7 963.8 L1634.8 965.2 L1635.9 966.0 L1637.0 965.9 L1638.1 965.9 L1639.2 964.8 L1640.3 965.2 L1641.4 964.0 L1642.5 964.0 L1643.6 962.6 L1644.7 962.2 L1645.8 965.7 L1646.9 963.7 L1648.0 965.2 L1649.1 964.7 L1650.2 966.0 L1651.3 964.6 L1652.4 964.1 L1653.5 964.6 L1654.6 964.8 L1655.7 965.6 L1656.8 964.2 L1657.9 963.8 L1659.0 965.5 L1660.1 963.7 L1661.2 965.4 L1662.3 963.2 L1663.4 964.9 L1663.7 965.0 L1664.4 949.9 L1664.5 965.6 L1665.1 965.0 L1665.6 962.2 L1666.7 964.3 L1667.8 964.6 L1668.9 965.1 L1670.0 965.9 L1671.1 965.9 L1672.2 957.9 L1673.3 964.5 L1674.4 965.1 L1675.5 958.2 L1676.6 965.2 L1677.7 965.3 L1678.8 965.3 L1679.9 964.3 L1681.0 965.4 L1682.1 964.3 L1683.2 961.1 L1684.3 965.0 L1685.4 965.2 L1686.5 965.4 L1687.6 963.5 L1688.7 964.4 L1689.8 965.7 L1690.9 961.8 L1692.0 962.8 L1693.1 963.4 L1694.2 962.6 L1695.3 964.6 L1696.4 964.3 L1697.5 965.1 L1698.6 965.9 L1699.7 965.8 L1700.8 964.8 L1701.9 960.1 L1703.0 965.4 L1704.1 965.8 L1705.2 962.5 L1706.3 965.4 L1707.4 963.8 L1708.5 965.4 L1709.6 965.8 L1710.7 965.0 L1711.8 965.2 L1712.9 964.2 L1714.0 965.6 L1715.1 964.4 L1716.2 961.0 L1717.3 965.1 L1718.4 962.9 L1719.5 963.1 L1720.6 964.7 L1721.7 964.9 L1722.8 962.9 L1723.9 964.6 L1725.0 965.3 L1726.1 964.7 L1727.2 964.8 L1728.3 963.4 L1729.4 961.6 L1730.5 963.7 L1731.6 964.2 L1732.7 964.6 L1733.8 961.0 L1734.9 964.2 L1736.0 964.5 L1737.1 965.7 L1738.2 965.5 L1739.3 964.6 L1740.4 964.9 L1741.5 963.9 L1742.6 965.2 L1743.7 965.9 L1744.8 964.5 L1745.9 965.6 L1747.0 963.1 L1748.1 965.1 L1749.2 965.9 L1750.3 963.9 L1751.4 964.9 L1752.5 964.6 L1753.6 964.2 L1754.7 965.4 L1755.8 965.2 L1756.9 965.7 L1758.0 966.0 L1759.1 964.0 L1760.2 964.6 L1761.3 963.7 L1762.4 966.0 L1763.5 965.9 L1764.6 964.9 L1765.7 965.6 L1766.8 964.9 L1767.9 965.2 L1769.0 958.9 L1770.1 961.3 L1771.2 965.0 L1772.3 965.3 L1773.4 964.3 L1774.5 965.3 L1775.6 964.4 L1776.7 964.2 L1777.8 964.9 L1778.3 965.0 L1778.9 965.2 L1779.0 956.0 L1779.7 965.0 L1780.0 962.2 L1781.1 964.2 L1782.2 965.9 L1783.3 963.2 L1784.4 965.2 L1785.5 965.1 L1786.6 965.1 L1787.7 965.8 L1788.6 965.0 L1788.8 965.7 L1789.3 852.5 L1789.9 964.7 L1790.0 965.0 L1791.0 965.8 L1792.1 965.2 L1793.2 964.8 L1794.3 961.2 L1795.4 965.5 L1796.5 965.5 L1797.6 965.3 L1798.7 965.5 L1799.8 964.3 L1800.9 964.7 L1802.0 965.3 L1803.1 963.9 L1804.2 965.8 L1805.3 965.7 L1806.4 964.3 L1807.5 965.3 L1808.6 965.6 L1809.7 964.9 L1810.8 965.2 L1811.9 965.7 L1812.8 965.0 L1813.0 963.3 L1814.0 817.7 L1814.1 963.7 L1815.2 965.1 L1815.5 901.2 L1816.3 965.6 L1817.0 943.0 L1817.4 964.4 L1818.5 965.2 L1819.0 959.2 L1819.6 966.0 L1820.7 965.7 L1821.0 965.0 L1821.8 965.1 L1822.9 965.9 L1824.0 962.0 L1825.1 965.6 L1826.2 963.8 L1827.3 965.5 L1828.4 963.3 L1829.5 964.4 L1830.6 963.4 L1831.7 964.7 L1832.8 965.2 L1833.9 965.4 L1835.0 965.0 L1836.1 965.7 L1837.2 961.4 L1838.3 963.7 L1839.4 963.7 L1840.5 964.6 L1841.6 963.8 L1842.7 963.8 L1843.8 964.1 L1844.9 964.0 L1846.0 965.6 L1847.1 965.8 L1848.2 964.9 L1849.3 965.9 L1850.4 965.0 L1851.5 965.9 L1852.6 964.5 L1853.7 964.2 L1854.8 965.5 L1855.9 965.6 L1857.0 965.8 L1858.1 965.5 L1859.2 964.1 L1860.3 965.4 L1861.4 965.8 L1862.5 964.5 L1863.6 962.6 L1864.7 964.4 L1865.8 964.5 L1866.9 965.6 L1868.0 962.8 L1869.1 964.7 L1870.2 963.5 L1871.3 964.4 L1872.4 965.7 L1873.5 965.6 L1874.6 964.3 L1875.7 961.1 L1876.8 964.2 L1877.9 965.1 L1879.0 965.2 L1880.1 964.3 L1881.2 965.1 L1882.3 964.9 L1883.4 963.6 L1884.5 964.8 L1885.6 965.7 L1886.4 965.0 L1886.7 964.9 L1887.1 956.9 L1887.8 964.7 L1887.8 965.0 L1888.9 963.7 L1890.0 965.8 L1891.1 964.0 L1892.2 965.9 L1893.3 964.8 L1894.4 963.9 L1895.5 965.3 L1896.6 960.9 L1897.7 965.9 L1898.8 964.0 L1899.9 966.0 L1901.0 965.2 L1902.1 965.7 L1903.2 962.8 L1904.3 965.4 L1905.4 965.3 L1906.5 965.6 L1907.6 964.2 L1908.7 963.9 L1909.8 965.3 L1910.9 964.9 L1912.0 965.8 L1913.1 965.4 L1914.2 960.8 L1915.3 965.0 L1916.4 960.8 L1917.5 964.0 L1918.6 963.7 L1919.7 965.2 L1920.8 965.8 L1921.9 963.3 L1923.0 960.1 L1924.1 965.9 L1925.2 963.6 L1926.3 964.4 L1927.4 964.8 L1928.5 963.1 L1929.6 965.8 L1930.7 965.3 L1931.8 965.5 L1932.9 965.4 L1934.0 965.5 L1934.4 965.0 L1935.1 947.6 L1935.1 963.3 L1935.8 965.0 L1936.2 963.7 L1937.3 965.8 L1938.4 964.3 L1939.5 962.8 L1940.6 959.5 L1941.7 964.2 L1942.8 963.0 L1943.9 964.4 L1945.0 965.6 L1946.1 965.4 L1947.2 965.3 L1947.9 965.0 L1948.3 965.6 L1948.6 896.6 L1949.3 965.0 L1949.4 963.0 L1950.5 965.1 L1951.6 965.9 L1952.7 964.3 L1953.8 965.5 L1954.9 965.3 L1956.0 962.5 L1957.1 958.9 L1958.2 965.1 L1959.3 966.0 L1960.4 964.2 L1961.5 962.5 L1962.6 964.4 L1963.3 965.0 L1963.7 964.7 L1964.0 943.0 L1964.7 965.0 L1964.8 965.0 L1965.9 965.3 L1967.0 964.3 L1968.1 964.2 L1969.2 965.8 L1970.3 959.6 L1971.4 964.9 L1972.5 964.9 L1973.6 963.5 L1974.7 965.9 L1975.8 964.0 L1976.9 964.9 L1978.0 962.2 L1979.1 966.0 L1980.2 965.8 L1981.3 965.0 L1982.4 961.3 L1983.5 965.2 L1984.6 963.7 L1985.7 964.0 L1986.6 965.0 L1986.8 965.4 L1987.3 956.9 L1987.9 964.8 L1988.0 965.0 L1989.0 965.7 L1990.1 964.5 L1991.2 965.7 L1992.3 965.8 L1993.4 965.9 L1994.5 960.3 L1995.6 963.0 L1996.7 965.5 L1996.8 965.0 L1997.5 949.9 L1997.8 964.4 L1998.2 965.0 L1998.9 963.9 L2000.0 965.9 L2001.1 965.3 L2002.2 965.2 L2003.3 958.7 L2004.4 962.2 L2005.5 965.8 L2006.6 963.0 L2007.7 964.7 L2008.8 963.8 L2009.9 965.9 L2011.0 959.4 L2012.1 964.1 L2013.2 965.0 L2014.3 961.7 L2015.4 964.7 L2016.5 965.5 L2017.6 965.7 L2018.7 963.1 L2019.8 965.3 L2020.9 963.5 L2022.0 962.6 L2023.1 965.7 L2024.2 963.2 L2025.3 965.1 L2026.4 964.6 L2027.5 962.3 L2028.6 964.6 L2029.7 962.9 L2030.8 962.4 L2031.9 965.6 L2033.0 965.8 L2034.1 963.0 L2035.2 963.7 L2036.3 965.3 L2037.4 965.6 L2038.5 958.6 L2039.6 964.6 L2040.7 964.5 L2041.5 965.0 L2041.8 964.9 L2042.2 943.0 L2042.9 965.9 L2042.9 965.0 L2044.0 965.5 L2045.1 964.6 L2046.2 965.9 L2047.3 963.3 L2048.4 960.8 L2049.5 964.9 L2050.6 965.2 L2051.7 961.8 L2052.8 964.6 L2053.9 964.5 L2055.0 965.7 L2056.1 964.6 L2057.2 965.5 L2058.3 962.7 L2059.4 965.5 L2060.5 965.2 L2061.6 965.0 L2062.7 958.8 L2063.8 964.6 L2064.9 963.1 L2066.0 965.2 L2067.1 964.9 L2068.2 963.4 L2069.3 962.8 L2070.4 965.1 L2070.4 965.0 L2071.1 956.9 L2071.5 966.0 L2071.8 965.0 L2072.6 965.8 L2073.7 965.0 L2074.8 965.4 L2075.9 964.8 L2077.0 963.3 L2078.1 965.6 L2079.2 963.3 L2080.3 964.0 L2081.4 965.1 L2082.5 961.8 L2083.6 965.8 L2084.7 962.4 L2085.8 966.0 L2086.9 965.3 L2088.0 963.0 L2089.1 965.0 L2090.2 964.8 L2091.3 965.9 L2092.4 965.5 L2093.5 964.7 L2093.7 965.0 L2094.4 771.3 L2094.6 963.3 L2095.1 965.0 L2095.7 964.2 L2096.8 965.2 L2097.9 965.7 L2098.4 965.0 L2099.0 959.3 L2099.1 954.6 L2099.8 965.0 L2100.1 965.2 L2101.2 965.1 L2102.3 965.4 L2103.4 963.0 L2104.5 966.0 L2105.6 965.6 L2106.7 964.4 L2107.8 963.2 L2108.9 964.9 L2110.0 965.4 L2111.1 965.2 L2112.2 960.0 L2113.3 962.1 L2114.4 964.1 L2115.5 963.0 L2116.6 963.9 L2117.7 959.1 L2117.9 965.0 L2118.6 943.0 L2118.8 965.1 L2119.3 965.0 L2119.9 964.2 L2121.0 964.6 L2122.1 962.9 L2123.2 965.7 L2124.3 962.7 L2125.4 964.2 L2126.5 965.4 L2127.6 965.2 L2128.7 964.1 L2129.8 965.6 L2130.9 965.7 L2132.0 964.9 L2132.4 965.0 L2133.1 943.0 L2133.1 965.4 L2133.8 965.0 L2134.2 965.5 L2135.3 966.0 L2136.4 961.6 L2137.5 964.9 L2138.6 964.6 L2139.7 965.9 L2140.8 963.1 L2141.9 963.5 L2143.0 965.5 L2144.1 963.3 L2145.2 965.2 L2146.3 963.4 L2147.4 963.8 L2148.5 965.2 L2149.6 964.0 L2150.7 964.8 L2151.8 964.3 L2152.9 963.8 L2154.0 965.7 L2154.3 965.0 L2155.0 957.8 L2155.1 965.2 L2155.7 965.0 L2156.2 964.2 L2157.3 965.3 L2158.4 964.3 L2159.5 966.0 L2160.6 965.9 L2161.7 964.9 L2162.8 965.2 L2163.9 963.8 L2165.0 963.8 L2166.1 965.5 L2167.2 963.6 L2168.3 964.7 L2169.4 964.9 L2170.5 964.6 L2171.6 964.1 L2172.7 964.5 L2173.8 965.3 L2174.9 964.8 L2176.0 965.1 L2177.1 965.5 L2178.2 965.5 L2179.3 964.2 L2179.9 965.0 L2180.4 965.8 L2180.6 940.7 L2181.3 965.0 L2181.5 964.3 L2182.6 959.5 L2183.6 965.0 L2183.7 964.9 L2184.3 945.3 L2184.8 965.9 L2185.0 965.0 L2185.9 964.3 L2187.0 964.4 L2188.1 963.3 L2189.2 964.6 L2190.3 965.5 L2191.4 964.0 L2192.5 963.6 L2193.6 964.3 L2194.7 965.0 L2195.8 965.0 L2196.9 963.8 L2197.6 965.0 L2198.0 963.7 L2198.3 933.7 L2199.0 965.0 L2199.1 965.4 L2200.2 965.1 L2201.3 965.5 L2202.4 965.6 L2203.5 965.0 L2204.6 965.5 L2205.7 963.6 L2206.8 965.9 L2207.8 965.0 L2207.9 963.7 L2208.5 956.9 L2209.0 964.0 L2209.2 965.0 L2210.1 965.2 L2211.2 965.4 L2212.3 963.9 L2213.4 963.2 L2214.5 963.5 L2215.6 965.2 L2216.7 960.1 L2217.8 958.7 L2218.9 964.6 L2220.0 965.0 L2221.1 965.4 L2221.8 965.0 L2222.2 962.3 L2222.5 956.9 L2223.2 965.0 L2223.3 965.4 L2224.4 965.7 L2225.5 965.4 L2226.6 964.4 L2227.7 965.0 L2228.8 964.2 L2229.9 965.7 L2231.0 963.8 L2232.1 964.7 L2233.2 963.8 L2234.3 963.8 L2235.4 964.8 L2236.5 964.4 L2237.6 965.2 L2238.1 965.0 L2238.7 964.8 L2238.8 960.6 L2239.5 965.0 L2239.8 965.5 L2240.9 964.1 L2242.0 964.8 L2243.1 962.7 L2244.2 962.8 L2245.3 964.9 L2246.4 965.0 L2247.5 964.5 L2248.6 965.6 L2249.7 963.9 L2250.8 965.1 L2251.9 965.2 L2253.0 964.7 L2254.1 964.8 L2255.2 963.7 L2256.3 964.1" stroke="#d0263a" stroke-width="2" fill="none" stroke-linejoin="round"/>
<path d="M1756.9 1153.6H2950.3M1756.9 1176.3H2950.3M1756.9 1199.1H2950.3M1756.9 1221.8H2950.3M1756.9 1244.5H2950.3M1866.7 1153.6V1244.5M1994.5 1153.6V1244.5M2122.4 1153.6V1244.5M2250.2 1153.6V1244.5M2378.1 1153.6V1244.5M2505.9 1153.6V1244.5M2633.8 1153.6V1244.5M2761.7 1153.6V1244.5M2889.5 1153.6V1244.5" stroke="#3d4046" stroke-width="1.7" fill="none"/>
<rect x="2551.2" y="1215.8" width="28.6" height="28.6" fill="#e8ae14"/>
<rect x="2594.0" y="1176.2" width="28.6" height="68.2" fill="#e8ae14"/>
<rect x="2636.6" y="1177.0" width="28.6" height="67.4" fill="#e8ae14"/>
<rect x="2679.3" y="1174.6" width="28.6" height="69.8" fill="#e8ae14"/>
<rect x="2722.0" y="1184.0" width="28.6" height="60.4" fill="#e8ae14"/>
<rect x="2764.6" y="1164.5" width="28.6" height="79.9" fill="#e8ae14"/>
<rect x="2807.2" y="1179.3" width="28.6" height="65.1" fill="#e8ae14"/>
<rect x="2849.9" y="1184.0" width="28.6" height="60.4" fill="#e8ae14"/>
<rect x="2892.5" y="1185.0" width="28.6" height="59.4" fill="#e8ae14"/>
<rect x="2935.2" y="1242.2" width="15.1" height="2.2" fill="#e8ae14"/>
<rect x="18.3" y="20.3" width="8.2" height="7.9" rx="0.8" stroke="#ccccdc" fill="none" stroke-width="2.6"/>
<rect x="32.2" y="20.3" width="8.2" height="7.9" rx="0.8" stroke="#ccccdc" fill="none" stroke-width="2.6"/>
<rect x="18.3" y="33.6" width="8.2" height="7.9" rx="0.8" stroke="#ccccdc" fill="none" stroke-width="2.6"/>
<rect x="32.2" y="33.6" width="8.2" height="7.9" rx="0.8" stroke="#ccccdc" fill="none" stroke-width="2.6"/>
<g stroke="#ccccdc" fill="none" stroke-width="2.6"><circle cx="733.2" cy="23.6" r="4"/><circle cx="719.5" cy="30.7" r="4"/><circle cx="733.2" cy="37.8" r="4"/><path d="M723.1 28.8L729.6 25.5M723.1 32.6L729.6 35.9"/></g>
<g stroke="#9d9fac" fill="none" stroke-width="2.6" stroke-linecap="round" stroke-linejoin="round"><circle cx="2467.3" cy="30.8" r="11.2"/><path d="M2467.3 23.5V31.3H2461.5"/></g>
<g stroke="#9d9fac" fill="none" stroke-width="2.6" stroke-linecap="round" stroke-linejoin="round"><path d="M2661.8 27.8L2666.6 32.6L2671.4 27.8"/><path d="M2889.5 27.8L2894.3 32.6L2899.1 27.8"/></g>
<g stroke="#9d9fac" fill="none" stroke-width="2.6" stroke-linecap="round" stroke-linejoin="round"><circle cx="2719.5" cy="28.8" r="9.8"/><path d="M2726.8 36.2L2732.5 41.8M2714.5 28.8H2724.5"/></g>
<g stroke="#9d9fac" fill="none" stroke-width="2.6" stroke-linecap="round" stroke-linejoin="round"><path d="M2783.6 26.5A10.3 10.3 0 0 1 2802 24.2"/><path d="M2803.6 35.2A10.3 10.3 0 0 1 2785 37.6"/><path d="M2782.8 19.5V26.8H2790"/><path d="M2804.4 42.2V35H2797.2"/></g>
<g stroke="#9d9fac" fill="none" stroke-width="2.6" stroke-linecap="round" stroke-linejoin="round"><rect x="2952.5" y="20" width="22.6" height="16.5" rx="2"/><path d="M2952.5 31.5H2975M2959.8 41.6H2968.2M2961.5 36.8V41.4M2966.5 36.8V41.4"/></g>
<g stroke="#33a2e5" fill="none" stroke-width="2" stroke-linecap="round" stroke-linejoin="round"><circle cx="2845.4" cy="1100.7" r="8.6"/><path d="M2845.4 1095V1101.2H2841"/></g>
</svg>
<span class="t" style="left:57.8px;top:16.7px;font-size:28px;color:#ccccdc;letter-spacing:0.74px;">Batterie-Management-Systeme</span>
<span class="t" style="left:479.4px;top:16.7px;font-size:28px;color:#ccccdc;">/</span>
<span class="t" style="left:498.8px;top:16.7px;font-size:28px;color:#ccccdc;letter-spacing:-0.15px;">Sonnen Batterie</span>
<span class="t" style="left:2495.4px;top:19.9px;font-size:23px;color:#9d9fac;letter-spacing:0.15px;-webkit-text-stroke:0.7px currentColor;">Last 12 hours</span>
<span class="t" style="left:2835.4px;top:19.9px;font-size:23px;color:#9d9fac;letter-spacing:0.26px;-webkit-text-stroke:0.7px currentColor;">30s</span>
<span class="t" style="left:697.2px;top:99.8px;font-size:21.5px;color:#ccccdc;letter-spacing:0.78px;-webkit-text-stroke:0.7px currentColor;">230 Volt Wechselrichter</span>
<span class="t" style="left:42.2px;top:150.3px;font-size:24px;color:#33a2e5;letter-spacing:0.59px;-webkit-text-stroke:0.85px currentColor;">Spannung</span>
<span class="t" style="left:43.4px;top:209.2px;font-size:24px;color:#ffffff;letter-spacing:0.59px;">235.00 V</span>
<span class="t" style="left:368.5px;top:150.3px;font-size:24px;color:#33a2e5;letter-spacing:0.49px;-webkit-text-stroke:0.85px currentColor;">Frequenz</span>
<span class="t" style="left:369.7px;top:209.2px;font-size:24px;color:#ffffff;letter-spacing:0.33px;">50 Hz</span>
<span class="t" style="left:684.2px;top:150.3px;font-size:24px;color:#33a2e5;letter-spacing:0.79px;-webkit-text-stroke:0.85px currentColor;">Verbrauch</span>
<span class="t" style="left:685.4px;top:209.2px;font-size:24px;color:#ffffff;letter-spacing:0.03px;">656 W</span>
<span class="t" style="left:1021.0px;top:150.3px;font-size:24px;color:#33a2e5;letter-spacing:0.70px;-webkit-text-stroke:0.85px currentColor;">Einspeisung</span>
<span class="t" style="left:1022.2px;top:209.2px;font-size:24px;color:#ffffff;letter-spacing:0.09px;">45 W</span>
<span class="t" style="left:1401.4px;top:150.3px;font-size:24px;color:#33a2e5;letter-spacing:0.66px;-webkit-text-stroke:0.85px currentColor;">Bezug</span>
<span class="t" style="left:1402.6px;top:209.2px;font-size:24px;color:#ffffff;letter-spacing:0.02px;">0 W</span>
<span class="t" style="left:750.0px;top:285.3px;font-size:21.5px;color:#ccccdc;letter-spacing:0.86px;-webkit-text-stroke:0.7px currentColor;">Batteriewerte</span>
<span class="t" style="left:42.2px;top:335.8px;font-size:24px;color:#33a2e5;letter-spacing:0.59px;-webkit-text-stroke:0.85px currentColor;">Spannung</span>
<span class="t" style="left:43.4px;top:394.7px;font-size:24px;color:#ffffff;letter-spacing:0.34px;">51.0 V</span>
<span class="t" style="left:437.7px;top:335.8px;font-size:24px;color:#33a2e5;letter-spacing:0.72px;-webkit-text-stroke:0.85px currentColor;">Ladung (-) / Entladung (+)</span>
<span class="t" style="left:438.9px;top:394.7px;font-size:24px;color:#ffffff;letter-spacing:0.20px;">-60 W</span>
<span class="t" style="left:1261.5px;top:335.8px;font-size:24px;color:#33a2e5;letter-spacing:0.88px;-webkit-text-stroke:0.85px currentColor;">Kapazität</span>
<span class="t" style="left:1262.7px;top:394.7px;font-size:24px;color:#ffffff;letter-spacing:-1.12px;">20%</span>
<span class="t" style="left:762.6px;top:470.8px;font-size:21.5px;color:#ccccdc;letter-spacing:0.87px;-webkit-text-stroke:0.7px currentColor;">Solarstrom</span>
<span class="t" style="left:42.2px;top:521.3px;font-size:24px;color:#33a2e5;letter-spacing:1.02px;-webkit-text-stroke:0.85px currentColor;">Solarstrom</span>
<span class="t" style="left:43.4px;top:580.2px;font-size:24px;color:#ffffff;letter-spacing:1.79px;">JA</span>
<span class="t" style="left:527.1px;top:521.3px;font-size:24px;color:#33a2e5;letter-spacing:0.53px;-webkit-text-stroke:0.85px currentColor;">PV-Ladung</span>
<span class="t" style="left:528.3px;top:580.2px;font-size:24px;color:#ffffff;letter-spacing:1.79px;">JA</span>
<span class="t" style="left:1017.4px;top:521.3px;font-size:24px;color:#33a2e5;letter-spacing:0.58px;-webkit-text-stroke:0.85px currentColor;">PV-Einspeisung</span>
<span class="t" style="left:1018.6px;top:580.2px;font-size:24px;color:#ffffff;letter-spacing:1.79px;">JA</span>
<span class="t" style="left:2163.8px;top:100.2px;font-size:21.5px;color:#ccccdc;letter-spacing:0.49px;-webkit-text-stroke:0.7px currentColor;">Bezug (-) und Einspeisung (+)</span>
<span class="t" style="left:1654.7px;top:153.0px;font-size:20px;color:#ccccdc;letter-spacing:-0.68px;">2 kW</span>
<span class="t" style="left:1654.7px;top:232.9px;font-size:20px;color:#ccccdc;letter-spacing:-0.68px;">1 kW</span>
<span class="t" style="left:1664.2px;top:312.8px;font-size:20px;color:#ccccdc;letter-spacing:-0.80px;">0 W</span>
<span class="t" style="left:1648.3px;top:392.4px;font-size:20px;color:#ccccdc;letter-spacing:-0.59px;">-1 kW</span>
<span class="t" style="left:1648.3px;top:472.0px;font-size:20px;color:#ccccdc;letter-spacing:-0.59px;">-2 kW</span>
<span class="t" style="left:1648.3px;top:552.0px;font-size:20px;color:#ccccdc;letter-spacing:-0.59px;">-3 kW</span>
<span class="t" style="left:1723.5px;top:577.9px;font-size:20px;color:#ccccdc;letter-spacing:-0.39px;">23:00</span>
<span class="t" style="left:1827.2px;top:577.9px;font-size:20px;color:#ccccdc;letter-spacing:-0.39px;">00:00</span>
<span class="t" style="left:1930.8px;top:577.9px;font-size:20px;color:#ccccdc;letter-spacing:-0.39px;">01:00</span>
<span class="t" style="left:2034.4px;top:577.9px;font-size:20px;color:#ccccdc;letter-spacing:-0.39px;">02:00</span>
<span class="t" style="left:2138.0px;top:577.9px;font-size:20px;color:#ccccdc;letter-spacing:-0.39px;">03:00</span>
<span class="t" style="left:2241.7px;top:577.9px;font-size:20px;color:#ccccdc;letter-spacing:-0.39px;">04:00</span>
<span class="t" style="left:2345.3px;top:577.9px;font-size:20px;color:#ccccdc;letter-spacing:-0.39px;">05:00</span>
<span class="t" style="left:2448.9px;top:577.9px;font-size:20px;color:#ccccdc;letter-spacing:-0.39px;">06:00</span>
<span class="t" style="left:2552.5px;top:577.9px;font-size:20px;color:#ccccdc;letter-spacing:-0.39px;">07:00</span>
<span class="t" style="left:2656.1px;top:577.9px;font-size:20px;color:#ccccdc;letter-spacing:-0.39px;">08:00</span>
<span class="t" style="left:2759.8px;top:577.9px;font-size:20px;color:#ccccdc;letter-spacing:-0.39px;">09:00</span>
<span class="t" style="left:2863.4px;top:577.9px;font-size:20px;color:#ccccdc;letter-spacing:-0.39px;">10:00</span>
<span class="t" style="left:857.3px;top:655.6px;font-size:21.5px;color:#ccccdc;letter-spacing:0.54px;-webkit-text-stroke:0.7px currentColor;">PV-Leistung, Verbrauch, Einspeisung, Bezug und Batteriekapazität</span>
<span class="t" style="left:73.1px;top:708.7px;font-size:20px;color:#ccccdc;letter-spacing:-0.68px;">3 kW</span>
<span class="t" style="left:73.1px;top:749.9px;font-size:20px;color:#ccccdc;letter-spacing:-0.68px;">3 kW</span>
<span class="t" style="left:73.1px;top:791.1px;font-size:20px;color:#ccccdc;letter-spacing:-0.68px;">2 kW</span>
<span class="t" style="left:73.1px;top:832.3px;font-size:20px;color:#ccccdc;letter-spacing:-0.68px;">2 kW</span>
<span class="t" style="left:73.1px;top:873.5px;font-size:20px;color:#ccccdc;letter-spacing:-0.68px;">1 kW</span>
<span class="t" style="left:61.4px;top:914.7px;font-size:20px;color:#ccccdc;letter-spacing:-0.65px;">500 W</span>
<span class="t" style="left:82.6px;top:955.9px;font-size:20px;color:#ccccdc;letter-spacing:-0.80px;">0 W</span>
<span class="t" style="left:171.3px;top:981.9px;font-size:20px;color:#ccccdc;letter-spacing:-0.39px;">23:00</span>
<span class="t" style="left:348.9px;top:981.9px;font-size:20px;color:#ccccdc;letter-spacing:-0.39px;">00:00</span>
<span class="t" style="left:526.4px;top:981.9px;font-size:20px;color:#ccccdc;letter-spacing:-0.39px;">01:00</span>
<span class="t" style="left:703.9px;top:981.9px;font-size:20px;color:#ccccdc;letter-spacing:-0.39px;">02:00</span>
<span class="t" style="left:881.4px;top:981.9px;font-size:20px;color:#ccccdc;letter-spacing:-0.39px;">03:00</span>
<span class="t" style="left:1058.8px;top:981.9px;font-size:20px;color:#ccccdc;letter-spacing:-0.39px;">04:00</span>
<span class="t" style="left:1236.3px;top:981.9px;font-size:20px;color:#ccccdc;letter-spacing:-0.39px;">05:00</span>
<span class="t" style="left:1413.8px;top:981.9px;font-size:20px;color:#ccccdc;letter-spacing:-0.39px;">06:00</span>
<span class="t" style="left:1591.3px;top:981.9px;font-size:20px;color:#ccccdc;letter-spacing:-0.39px;">07:00</span>
<span class="t" style="left:1768.8px;top:981.9px;font-size:20px;color:#ccccdc;letter-spacing:-0.39px;">08:00</span>
<span class="t" style="left:1946.3px;top:981.9px;font-size:20px;color:#ccccdc;letter-spacing:-0.39px;">09:00</span>
<span class="t" style="left:2123.8px;top:981.9px;font-size:20px;color:#ccccdc;letter-spacing:-0.39px;">10:00</span>
<span class="t" style="left:2274.2px;top:710.3px;font-size:19.5px;color:#ccccdc;letter-spacing:-0.79px;">100%</span>
<span class="t" style="left:2274.2px;top:771.8px;font-size:19.5px;color:#ccccdc;letter-spacing:-1.11px;">75%</span>
<span class="t" style="left:2274.2px;top:833.2px;font-size:19.5px;color:#ccccdc;letter-spacing:-1.11px;">50%</span>
<span class="t" style="left:2274.2px;top:894.7px;font-size:19.5px;color:#ccccdc;letter-spacing:-1.11px;">25%</span>
<span class="t" style="left:2274.2px;top:956.2px;font-size:19.5px;color:#ccccdc;letter-spacing:-2.68px;">0%</span>
<span class="t" style="left:4.0px;top:845.8px;font-size:19.5px;color:#ccccdc;width:76.0px;transform:rotate(-90deg);transform-origin:50% 50%;letter-spacing:0.32px;">Leistung</span>
<span class="t" style="left:2301.0px;top:845.0px;font-size:20px;color:#ccccdc;width:83.0px;transform:rotate(90deg);transform-origin:50% 50%;letter-spacing:-0.05px;">Kapazität</span>
<span class="t" style="left:81.5px;top:1019.3px;font-size:20px;color:#ccccdc;letter-spacing:-0.17px;">PV-Leistung</span>
<span class="t" style="left:240.8px;top:1019.3px;font-size:20px;color:#ccccdc;letter-spacing:-0.27px;">Verbrauch</span>
<span class="t" style="left:383.4px;top:1019.3px;font-size:20px;color:#ccccdc;letter-spacing:-0.24px;">Einspeisung</span>
<span class="t" style="left:543.2px;top:1019.3px;font-size:20px;color:#ccccdc;letter-spacing:-0.68px;">Bezug</span>
<span class="t" style="left:2204.8px;top:1019.3px;font-size:20px;color:#ccccdc;letter-spacing:0.03px;">Batteriekapazität</span>
<span class="t" style="left:2590.8px;top:674.6px;font-size:104px;color:#73bf69;letter-spacing:8.56px;-webkit-text-stroke:3px #73bf69;">N/A</span>
<span class="t" style="left:2569.1px;top:849.3px;font-size:62.5px;color:#f7f8fa;letter-spacing:2.68px;-webkit-text-stroke:2.4px #f7f8fa;">No data</span>
<span class="t" style="left:2397.8px;top:991.3px;font-size:24px;color:#f7f8fa;letter-spacing:0.24px;-webkit-text-stroke:0.3px #f7f8fa;">Netzbezug</span>
<span class="t" style="left:2805.8px;top:986.8px;font-size:33.5px;color:#f7f8fa;letter-spacing:1.03px;-webkit-text-stroke:1.3px #f7f8fa;">Solarstrom</span>
<span class="t" style="left:205.8px;top:1088.8px;font-size:21.5px;color:#ccccdc;letter-spacing:0.60px;-webkit-text-stroke:0.7px currentColor;">Steuerung</span>
<span class="t" style="left:165.8px;top:1151.0px;font-size:22px;color:#1a1a1a;letter-spacing:0.34px;">RPI ausschalten</span>
<span class="t" style="left:169.5px;top:1204.1px;font-size:22px;color:#1a1a1a;letter-spacing:0.32px;">RPI neu starten</span>
<span class="t" style="left:990.2px;top:1088.8px;font-size:21.5px;color:#ccccdc;letter-spacing:0.86px;-webkit-text-stroke:0.7px currentColor;">Leistungsdaten</span>
<span class="t" style="left:541.4px;top:1138.9px;font-size:24px;color:#33a2e5;letter-spacing:0.71px;-webkit-text-stroke:0.85px currentColor;">Bezeichnung</span>
<span class="t" style="left:1336.8px;top:1138.9px;font-size:24px;color:#33a2e5;letter-spacing:0.88px;-webkit-text-stroke:0.85px currentColor;">Summe</span>
<span class="t" style="left:540.4px;top:1199.3px;font-size:24px;color:#fff;letter-spacing:0.44px;">Erzeugte Sonnenenergie von Heute</span>
<span class="t" style="left:1337.7px;top:1199.3px;font-size:24px;color:#fff;letter-spacing:0.39px;">624.23 Wh</span>
<span class="t" style="left:540.4px;top:1262.7px;font-size:24px;color:#fff;letter-spacing:0.61px;">Verbrauch Heute</span>
<span class="t" style="left:1337.7px;top:1262.7px;font-size:24px;color:#fff;letter-spacing:0.37px;">28.46 kWh</span>
<span class="t" style="left:2146.9px;top:1088.5px;font-size:21.5px;color:#ccccdc;letter-spacing:0.65px;-webkit-text-stroke:0.7px currentColor;">Solarleistung der letzten 14 Tage</span>
<span class="t" style="left:2862.6px;top:1089.2px;font-size:19.5px;color:#33a2e5;letter-spacing:0.05px;-webkit-text-stroke:0.7px currentColor;">Last 4 weeks</span>
<span class="t" style="left:1683.3px;top:1142.9px;font-size:19px;color:#ccccdc;letter-spacing:-0.06px;">40 kWh</span>
<span class="t" style="left:1683.3px;top:1165.6px;font-size:19px;color:#ccccdc;letter-spacing:-0.06px;">30 kWh</span>
<span class="t" style="left:1683.3px;top:1188.4px;font-size:19px;color:#ccccdc;letter-spacing:-0.06px;">20 kWh</span>
<span class="t" style="left:1683.3px;top:1211.1px;font-size:19px;color:#ccccdc;letter-spacing:-0.06px;">10 kWh</span>
<span class="t" style="left:1703.3px;top:1233.8px;font-size:19px;color:#ccccdc;letter-spacing:-0.07px;">0 Wh</span>
<span class="t" style="left:1840.0px;top:1257.4px;font-size:20px;color:#ccccdc;letter-spacing:-0.26px;">10/01</span>
<span class="t" style="left:1967.8px;top:1257.4px;font-size:20px;color:#ccccdc;letter-spacing:-0.26px;">10/04</span>
<span class="t" style="left:2095.7px;top:1257.4px;font-size:20px;color:#ccccdc;letter-spacing:-0.26px;">10/07</span>
<span class="t" style="left:2223.6px;top:1257.4px;font-size:20px;color:#ccccdc;letter-spacing:-0.26px;">10/10</span>
<span class="t" style="left:2351.4px;top:1257.4px;font-size:20px;color:#ccccdc;letter-spacing:-0.26px;">10/13</span>
<span class="t" style="left:2479.2px;top:1257.4px;font-size:20px;color:#ccccdc;letter-spacing:-0.26px;">10/16</span>
<span class="t" style="left:2607.1px;top:1257.4px;font-size:20px;color:#ccccdc;letter-spacing:-0.26px;">10/19</span>
<span class="t" style="left:2735.0px;top:1257.4px;font-size:20px;color:#ccccdc;letter-spacing:-0.26px;">10/22</span>
<span class="t" style="left:2862.8px;top:1257.4px;font-size:20px;color:#ccccdc;letter-spacing:-0.26px;">10/25</span>
<span class="t" style="left:1630.2px;top:1200.5px;font-size:19px;color:#ccccdc;width:64.5px;transform:rotate(-90deg);transform-origin:50% 50%;letter-spacing:0.24px;">pro Tag</span>
</div></body></html>
